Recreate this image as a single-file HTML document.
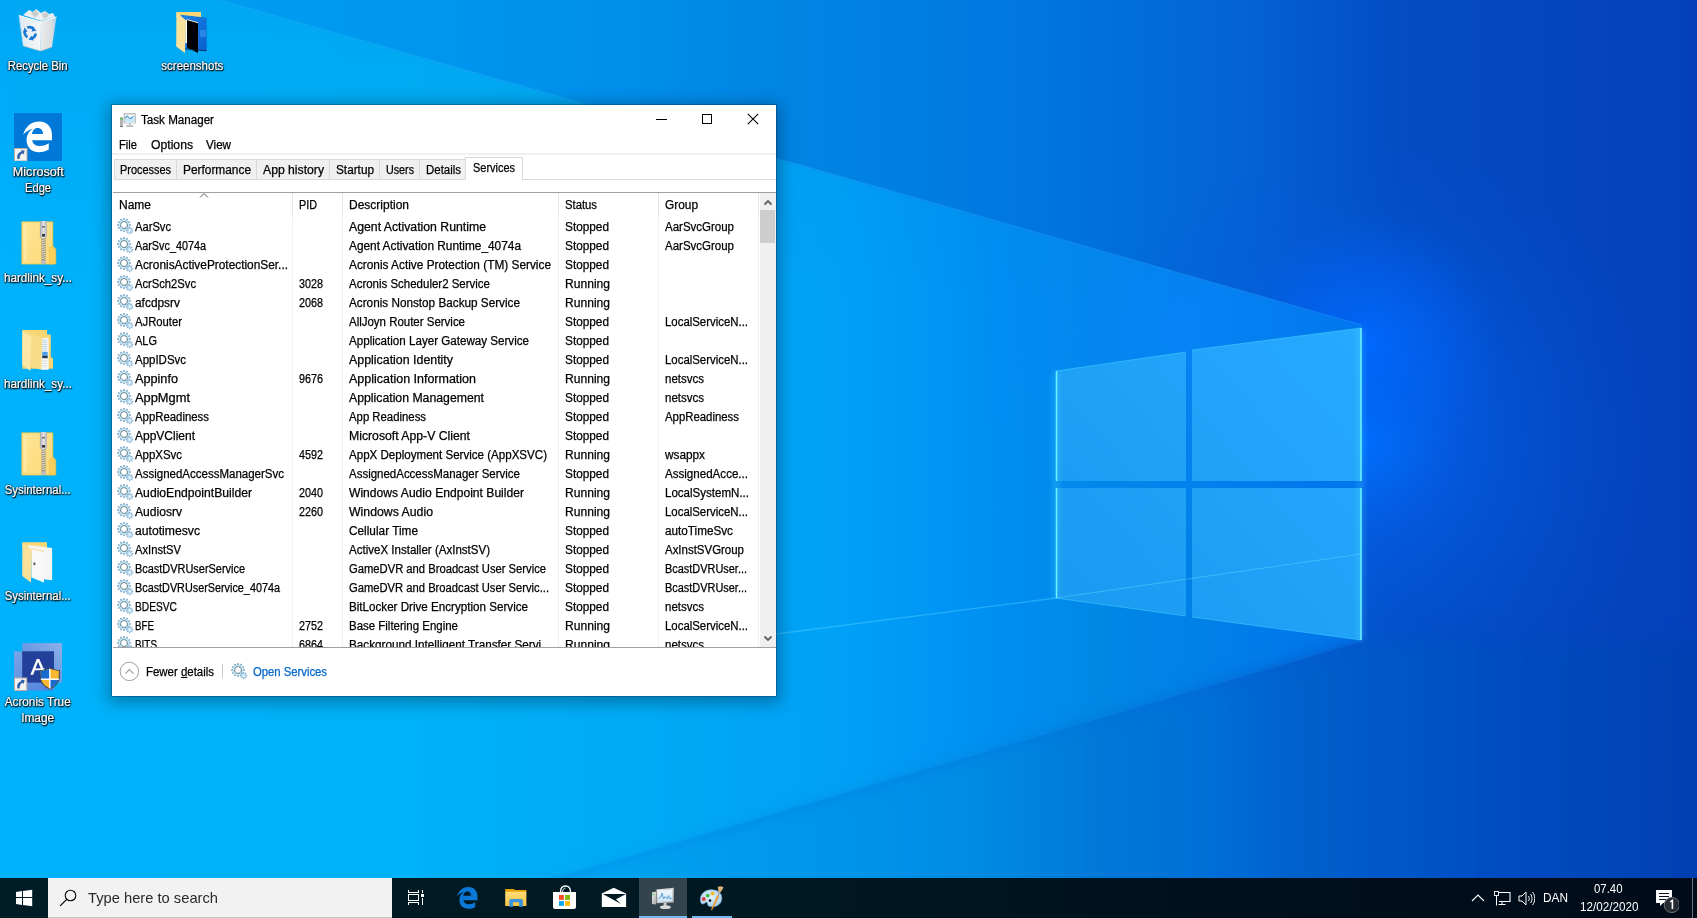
<!DOCTYPE html>
<html><head><meta charset="utf-8"><style>
html,body{margin:0;padding:0}
body{width:1697px;height:918px;overflow:hidden;position:relative;font-family:"Liberation Sans", sans-serif;color:#000}
#tm span{-webkit-text-stroke-width:0.25px}
.dl{position:absolute;text-align:center;color:#fff;font-size:12px;line-height:15px;text-shadow:0 0 2px #000,0 1px 2px #000,1px 1px 1px rgba(0,0,0,.8)}
.dl span{-webkit-text-stroke-width:0.2px}
</style></head><body>
<svg width="1697" height="918" style="position:absolute;left:0;top:0">
<defs>
<linearGradient id="bg" gradientUnits="userSpaceOnUse" x1="0" y1="0" x2="1697" y2="0">
 <stop offset="0" stop-color="#00a4f4"/>
 <stop offset="0.354" stop-color="#0090ec"/>
 <stop offset="0.471" stop-color="#0084e4"/>
 <stop offset="0.56" stop-color="#007ce2"/>
 <stop offset="0.619" stop-color="#0074e0"/>
 <stop offset="0.737" stop-color="#0462d6"/>
 <stop offset="0.825" stop-color="#044cc4"/>
 <stop offset="1" stop-color="#0440bc"/>
</linearGradient>
<linearGradient id="beam" gradientUnits="userSpaceOnUse" x1="0" y1="0" x2="1361" y2="0">
 <stop offset="0" stop-color="#00b2fc"/>
 <stop offset="0.294" stop-color="#00b2f8"/>
 <stop offset="0.514" stop-color="#00a8f4"/>
 <stop offset="0.625" stop-color="#00a0f8"/>
 <stop offset="0.735" stop-color="#008ef2"/>
 <stop offset="0.808" stop-color="#0088e6"/>
 <stop offset="1" stop-color="#0074ec"/>
</linearGradient>
<linearGradient id="beamv" gradientUnits="userSpaceOnUse" x1="0" y1="0" x2="0" y2="300">
 <stop offset="0" stop-color="#0060c0" stop-opacity="0.12"/>
 <stop offset="1" stop-color="#0060c0" stop-opacity="0"/>
</linearGradient>
<linearGradient id="floor" gradientUnits="userSpaceOnUse" x1="0" y1="0" x2="1697" y2="0">
 <stop offset="0.354" stop-color="#00a4f0"/>
 <stop offset="0.53" stop-color="#0090e8"/>
 <stop offset="0.589" stop-color="#0088e2"/>
 <stop offset="0.648" stop-color="#0278d8"/>
 <stop offset="0.707" stop-color="#0070d8"/>
 <stop offset="0.766" stop-color="#0460cc"/>
 <stop offset="0.884" stop-color="#044cc2"/>
 <stop offset="1" stop-color="#0440b2"/>
</linearGradient>
<radialGradient id="glow" cx="1365" cy="440" r="300" gradientUnits="userSpaceOnUse">
 <stop offset="0" stop-color="#0070ff" stop-opacity="1"/>
 <stop offset="0.3" stop-color="#0464f0" stop-opacity="0.55"/>
 <stop offset="1" stop-color="#0450d0" stop-opacity="0"/>
</radialGradient>
<radialGradient id="glow3" cx="1370" cy="345" r="130" gradientUnits="userSpaceOnUse">
 <stop offset="0" stop-color="#0068ff" stop-opacity="0.9"/>
 <stop offset="0.5" stop-color="#0064f8" stop-opacity="0.5"/>
 <stop offset="1" stop-color="#0060f0" stop-opacity="0"/>
</radialGradient>
<radialGradient id="glow2" cx="1180" cy="330" r="220" gradientUnits="userSpaceOnUse">
 <stop offset="0" stop-color="#0a84ff" stop-opacity="0.6"/>
 <stop offset="1" stop-color="#0a84ff" stop-opacity="0"/>
</radialGradient>
<linearGradient id="pane" gradientUnits="userSpaceOnUse" x1="1056" y1="600" x2="1361" y2="330">
 <stop offset="0" stop-color="#1a9af0"/>
 <stop offset="1" stop-color="#26aaff"/>
</linearGradient>
<filter id="fl" x="-10%" y="-10%" width="120%" height="120%"><feGaussianBlur stdDeviation="9"/></filter>
<filter id="soft" x="-5%" y="-5%" width="110%" height="110%"><feGaussianBlur stdDeviation="1.2"/></filter>
<filter id="gl" x="-50%" y="-50%" width="200%" height="200%"><feGaussianBlur stdDeviation="3"/></filter>
</defs>
<rect width="1697" height="918" fill="url(#bg)"/>
<polygon points="800,640 1361,640 1697,640 1697,918 800,918" fill="url(#floor)" opacity="0"/>
<polygon points="1361,640 -100,1058 1697,1058 1697,918" fill="url(#floor)" opacity="0.0"/>
<rect width="1697" height="918" fill="url(#glow)"/>
<rect width="1697" height="918" fill="url(#glow3)"/>
<polygon points="-100,-30 218,0 1361,325 1361,641 -100,1070" fill="url(#beam)" filter="url(#soft)"/>
<polygon points="-100,-30 218,0 1361,325 1361,641 -100,1070" fill="url(#beamv)"/>
<polygon points="-100,-30 218,0 1361,325 1361,641 -100,1070" fill="url(#glow2)"/>
<polygon points="1361,641 -100,1070 -100,1200 1800,1200 1800,641" fill="url(#floor)" filter="url(#fl)"/>
<line x1="218" y1="0" x2="1361" y2="325" stroke="#40b8ff" stroke-width="1.2" opacity="0.25"/>
<line x1="776" y1="634" x2="1056" y2="598" stroke="#50d0ff" stroke-width="1.4" opacity="0.45"/>
<line x1="0" y1="1040" x2="1361" y2="641" stroke="#40b8ff" stroke-width="1.2" opacity="0.1"/>
<g fill="url(#pane)">
 <polygon points="1056,371 1186,352 1186,481 1056,481"/>
 <polygon points="1192,350 1361,328 1361,481 1192,481"/>
 <polygon points="1056,488 1186,488 1186,616 1056,598"/>
 <polygon points="1192,488 1361,488 1361,640 1192,617"/>
</g>
<g fill="none" stroke="#48d8ff" stroke-width="1" opacity="0.5">
 <path d="M1056,371 L1186,352 M1192,350 L1361,328 M1056,598 L1186,616 M1192,617 L1361,640"/>
</g>
<g stroke="#5ef0ff" stroke-width="2" filter="url(#gl)" opacity="0.7">
 <line x1="1056" y1="371" x2="1056" y2="598"/>
 <line x1="1361" y1="328" x2="1361" y2="640"/>
</g>
<g stroke="#6af4ff" stroke-width="1.5">
 <line x1="1056.5" y1="371" x2="1056.5" y2="481"/>
 <line x1="1056.5" y1="488" x2="1056.5" y2="598"/>
 <line x1="1361" y1="328" x2="1361" y2="481"/>
 <line x1="1361" y1="488" x2="1361" y2="640"/>
</g>
<line x1="1056" y1="598" x2="1361" y2="554" stroke="#60d8ff" stroke-width="1" opacity="0.45"/>
</svg>
<svg style="position:absolute;left:14px;top:4px" width="48" height="50" viewBox="0 0 48 50">
<defs><linearGradient id="rbL" x1="0" y1="0" x2="1" y2="0"><stop offset="0" stop-color="#dfe9f0"/><stop offset="1" stop-color="#f4f6f7"/></linearGradient>
<linearGradient id="rbR" x1="0" y1="0" x2="1" y2="0"><stop offset="0" stop-color="#e9eaeb"/><stop offset="0.7" stop-color="#d9dde0"/><stop offset="1" stop-color="#9fcbe8"/></linearGradient></defs>
<polygon points="5,11.5 27,18 26.7,47 9.3,42" fill="url(#rbL)"/>
<polygon points="27,18 42.5,13 38,43 26.7,47" fill="url(#rbR)"/>
<path d="M9,11 L15,6 L19,8 L22,5 L27,9 L31,7 L35,10 L39,9 L41,13 L27,17 Z" fill="#eceeef"/>
<path d="M17,9 L22,6 L25,10 L21,14Z M28,10 L33,8 L35,12 L30,15Z" fill="#c9cdd0"/>
<polyline points="5,11.5 27,18 42.5,13" fill="none" stroke="#ffffff" stroke-width="1"/>
<path d="M5,11.5 L9.3,42" stroke="#b8d8ee" stroke-width="0.8"/>
<path d="M9.3,42 L26.7,47 L38,43" fill="none" stroke="#d8b8a8" stroke-width="0.7" opacity="0.7"/>
<g fill="none" stroke="#1b78d2" stroke-width="2.6">
<path d="M13.2,23.6 A6.2,6.2 0 0 1 19.6,24.8"/>
<path d="M21.8,29.5 A6.2,6.2 0 0 1 17.5,34.5"/>
<path d="M13.5,33.2 A6.2,6.2 0 0 1 10.8,27"/>
</g>
<g fill="#1b78d2"><path d="M18.5,22.2 L22.5,26.8 L17.6,27.4Z"/><path d="M19.6,36.6 L14.4,35.6 L17.6,31.8Z"/><path d="M9.2,29 L10.4,23.6 L13.6,27.4Z"/></g>
</svg><div class="dl" style="left:0px;top:59.0px;width:76px"><span style="display:inline-block;transform-origin:50% 0;transform:scaleX(0.9470)">Recycle Bin</span></div><svg style="position:absolute;left:168px;top:6px" width="48" height="50" viewBox="0 0 48 50">
<defs><linearGradient id="ssB" x1="0" y1="0" x2="1" y2="1"><stop offset="0" stop-color="#1c84e8"/><stop offset="1" stop-color="#0a5fd0"/></linearGradient></defs>
<polygon points="8.4,6 33,6 33,11 8.4,11" fill="#f9d774"/>
<polygon points="12.5,8.7 38.7,11.7 38.7,44.7 17.4,43" fill="url(#ssB)"/>
<rect x="32" y="24" width="6" height="7" fill="#3a9cf0" opacity="0.6"/>
<polygon points="17.4,14 19.5,14 19.5,37 17.4,37" fill="#ffffff"/>
<polygon points="19,13 30,16.3 30,47 19,41.4" fill="#000"/>
<polygon points="19,13 30,16.3 30,17.2 19,14" fill="#ffffff"/>
<polygon points="17.4,42.3 38.7,44.5 38.7,45.2 17.4,43.2" fill="#10223a"/>
<polygon points="8.4,6.5 18,14.2 16.9,47 8.2,40.6" fill="#fbe29c"/>
</svg><div class="dl" style="left:154px;top:59.0px;width:76px"><span style="display:inline-block;transform-origin:50% 0;transform:scaleX(0.9582)">screenshots</span></div><svg style="position:absolute;left:14px;top:113px" width="48" height="48" viewBox="0 0 48 48">
<rect width="48" height="48" fill="#0078d7"/>
<path d="M9.2,21.7 C11.5,13 18,8.6 25.5,8.6 C33,8.6 38,14 38,22 L38,27.2 L18.2,27.2 C18.6,31 21.8,33 26,33 C29.5,33 32.5,31.8 34.8,30.2 L34.8,36.6 C32,38.3 28.8,39.2 25,39.2 C17.2,39.2 12.6,34 12.6,27 C12.6,22.5 14.5,18.5 19,15.8 C15.5,16.5 11.5,18.8 9.2,21.7 Z M18,20.9 L29,20.9 C29,17.5 27,14.9 23.5,14.9 C20.5,14.9 18.5,17.5 18,20.9 Z" fill="#fff" fill-rule="evenodd"/>
<rect x="0.5" y="35.5" width="12.5" height="12.5" fill="#f2f2f2" stroke="#b9aca2" stroke-width="1"/>
<path d="M3.5,46 C2.6,42.5 4,39.5 7.5,38.8 L6.8,37.2 L10.6,37.4 L9.8,41.4 L8.8,40.2 C6.5,41 5.5,43 5.6,46 Z" fill="#2e5ea8"/>
</svg><div class="dl" style="left:0px;top:165.0px;width:76px"><span style="display:inline-block;transform-origin:50% 0;transform:scaleX(1.0475)">Microsoft</span></div><div class="dl" style="left:0px;top:180.5px;width:76px"><span style="display:inline-block;transform-origin:50% 0;transform:scaleX(0.9275)">Edge</span></div><svg style="position:absolute;left:14px;top:214px" width="48" height="54" viewBox="0 0 48 54">
<defs><linearGradient id="zpf14214" x1="0" y1="0" x2="1" y2="1"><stop offset="0" stop-color="#ffe596"/><stop offset="1" stop-color="#fcd978"/></linearGradient>
<linearGradient id="zph14214" x1="0" y1="0" x2="1" y2="0"><stop offset="0" stop-color="#a8a8a8"/><stop offset="0.5" stop-color="#e2e2e2"/><stop offset="1" stop-color="#b4b4b4"/></linearGradient></defs>
<rect x="7.9" y="7.9" width="30.9" height="42.1" fill="url(#zpf14214)" stroke="#f2c545" stroke-width="0.8"/>
<path d="M11.2,11 V47" stroke="#fff4cc" stroke-width="0.9"/>
<path d="M38.8,31.8 L41.8,35.3 L41.8,50 L35.3,50 L35.3,35.5 C35.3,34.2 36.5,33 38.8,31.8Z" fill="#f9cf5c" stroke="#f0c040" stroke-width="0.6"/>
<rect x="27.6" y="24" width="3.9" height="23" fill="#8a7a52"/>
<path d="M27.8,24.5 L31.3,25.4" stroke="#f4f4f4" stroke-width="0.9"/><path d="M27.8,26.3 L31.3,27.2" stroke="#f4f4f4" stroke-width="0.9"/><path d="M27.8,28.1 L31.3,29.0" stroke="#f4f4f4" stroke-width="0.9"/><path d="M27.8,29.9 L31.3,30.799999999999997" stroke="#f4f4f4" stroke-width="0.9"/><path d="M27.8,31.7 L31.3,32.6" stroke="#f4f4f4" stroke-width="0.9"/><path d="M27.8,33.5 L31.3,34.4" stroke="#f4f4f4" stroke-width="0.9"/><path d="M27.8,35.3 L31.3,36.2" stroke="#f4f4f4" stroke-width="0.9"/><path d="M27.8,37.1 L31.3,38.0" stroke="#f4f4f4" stroke-width="0.9"/><path d="M27.8,38.9 L31.3,39.8" stroke="#f4f4f4" stroke-width="0.9"/><path d="M27.8,40.7 L31.3,41.599999999999994" stroke="#f4f4f4" stroke-width="0.9"/><path d="M27.8,42.5 L31.3,43.4" stroke="#f4f4f4" stroke-width="0.9"/><path d="M27.8,44.3 L31.3,45.2" stroke="#f4f4f4" stroke-width="0.9"/>
<rect x="27" y="46.2" width="5" height="3.6" fill="#bdbdbd"/>
<rect x="25.9" y="7" width="7.1" height="17" rx="1.6" fill="url(#zph14214)"/>
<rect x="28" y="12" width="2.8" height="1.6" fill="#707070"/>
<rect x="28" y="20" width="3" height="2.6" fill="#3a3a3a"/>
</svg><div class="dl" style="left:0px;top:271.0px;width:76px"><span style="display:inline-block;transform-origin:50% 0;transform:scaleX(0.9740)">hardlink_sy...</span></div><svg style="position:absolute;left:14px;top:324px" width="48" height="50" viewBox="0 0 48 50">
<polygon points="8.4,6 33,6 33,10.4 36.8,10.4 36.8,32.7 39,34.5 39,44.7 8.4,44.7" fill="#f8d572"/>
<polygon points="27.2,13.9 34.6,13.9 34.6,45.8 27.2,45.8" fill="#f6f6f6"/>
<path d="M28.2,16.0 h5" stroke="#8fb8de" stroke-width="0.6"/><path d="M28.2,18.2 h5" stroke="#8fb8de" stroke-width="0.6"/><path d="M28.2,20.4 h5" stroke="#8fb8de" stroke-width="0.6"/><path d="M28.2,22.6 h5" stroke="#8fb8de" stroke-width="0.6"/><path d="M28.2,24.8 h5" stroke="#8fb8de" stroke-width="0.6"/><path d="M28.2,27.0 h5" stroke="#8fb8de" stroke-width="0.6"/>
<rect x="28.2" y="28" width="5.5" height="3.6" fill="#4aa0e6"/>
<rect x="28.2" y="31.6" width="5.5" height="2.6" fill="#1a3a5a"/>
<path d="M28.2,37 h5 M28.2,39.5 h5 M28.2,42 h5" stroke="#c8c8c8" stroke-width="0.6"/>
<polygon points="13,8.2 28.3,13.6 27.2,45.8 17.4,43" fill="#f8dc88"/>
<polygon points="8.4,6.5 17.4,13 16.3,46.9 8.2,40.6" fill="#fde7a6"/>
</svg><div class="dl" style="left:0px;top:377.0px;width:76px"><span style="display:inline-block;transform-origin:50% 0;transform:scaleX(0.9740)">hardlink_sy...</span></div><svg style="position:absolute;left:14px;top:425px" width="48" height="54" viewBox="0 0 48 54">
<defs><linearGradient id="zpf14425" x1="0" y1="0" x2="1" y2="1"><stop offset="0" stop-color="#ffe596"/><stop offset="1" stop-color="#fcd978"/></linearGradient>
<linearGradient id="zph14425" x1="0" y1="0" x2="1" y2="0"><stop offset="0" stop-color="#a8a8a8"/><stop offset="0.5" stop-color="#e2e2e2"/><stop offset="1" stop-color="#b4b4b4"/></linearGradient></defs>
<rect x="7.9" y="7.9" width="30.9" height="42.1" fill="url(#zpf14425)" stroke="#f2c545" stroke-width="0.8"/>
<path d="M11.2,11 V47" stroke="#fff4cc" stroke-width="0.9"/>
<path d="M38.8,31.8 L41.8,35.3 L41.8,50 L35.3,50 L35.3,35.5 C35.3,34.2 36.5,33 38.8,31.8Z" fill="#f9cf5c" stroke="#f0c040" stroke-width="0.6"/>
<rect x="27.6" y="24" width="3.9" height="23" fill="#8a7a52"/>
<path d="M27.8,24.5 L31.3,25.4" stroke="#f4f4f4" stroke-width="0.9"/><path d="M27.8,26.3 L31.3,27.2" stroke="#f4f4f4" stroke-width="0.9"/><path d="M27.8,28.1 L31.3,29.0" stroke="#f4f4f4" stroke-width="0.9"/><path d="M27.8,29.9 L31.3,30.799999999999997" stroke="#f4f4f4" stroke-width="0.9"/><path d="M27.8,31.7 L31.3,32.6" stroke="#f4f4f4" stroke-width="0.9"/><path d="M27.8,33.5 L31.3,34.4" stroke="#f4f4f4" stroke-width="0.9"/><path d="M27.8,35.3 L31.3,36.2" stroke="#f4f4f4" stroke-width="0.9"/><path d="M27.8,37.1 L31.3,38.0" stroke="#f4f4f4" stroke-width="0.9"/><path d="M27.8,38.9 L31.3,39.8" stroke="#f4f4f4" stroke-width="0.9"/><path d="M27.8,40.7 L31.3,41.599999999999994" stroke="#f4f4f4" stroke-width="0.9"/><path d="M27.8,42.5 L31.3,43.4" stroke="#f4f4f4" stroke-width="0.9"/><path d="M27.8,44.3 L31.3,45.2" stroke="#f4f4f4" stroke-width="0.9"/>
<rect x="27" y="46.2" width="5" height="3.6" fill="#bdbdbd"/>
<rect x="25.9" y="7" width="7.1" height="17" rx="1.6" fill="url(#zph14425)"/>
<rect x="28" y="12" width="2.8" height="1.6" fill="#707070"/>
<rect x="28" y="20" width="3" height="2.6" fill="#3a3a3a"/>
</svg><div class="dl" style="left:0px;top:482.5px;width:76px"><span style="display:inline-block;transform-origin:50% 0;transform:scaleX(0.9514)">Sysinternal...</span></div><svg style="position:absolute;left:14px;top:534px" width="48" height="50" viewBox="0 0 48 50">
<polygon points="8.4,8.2 33,8.2 33,14 8.4,14" fill="#f9d774"/>
<polygon points="13.6,10.9 38.1,13.9 38.1,46.3 29.4,45.2" fill="#f5f5f5"/>
<polygon points="17.4,14.7 30,17.4 30,48.5 17.4,43.6" fill="#f8f8f8"/>
<path d="M17.4,14.7 L30,17.4" stroke="#f2d27a" stroke-width="0.8"/>
<ellipse cx="20.4" cy="29.7" rx="1.1" ry="1.5" fill="#5a5a5a"/>
<polygon points="8.4,8.7 18,15.8 16.9,48.5 8.2,42" fill="#fbe09a"/>
</svg><div class="dl" style="left:0px;top:589.0px;width:76px"><span style="display:inline-block;transform-origin:50% 0;transform:scaleX(0.9514)">Sysinternal...</span></div><svg style="position:absolute;left:14px;top:642px" width="48" height="50" viewBox="0 0 48 50">
<defs><linearGradient id="acA" x1="0" y1="1" x2="1" y2="0"><stop offset="0" stop-color="#4f86de"/><stop offset="1" stop-color="#8db0e8"/></linearGradient>
<linearGradient id="acB" x1="0" y1="0" x2="1" y2="1"><stop offset="0" stop-color="#7aa4e6"/><stop offset="1" stop-color="#4f82dc"/></linearGradient></defs>
<rect x="8.2" y="1.1" width="39.8" height="39.5" fill="url(#acA)"/>
<rect x="0" y="9.3" width="40" height="39.2" fill="url(#acB)"/>
<rect x="8.2" y="9.3" width="31.8" height="31.3" fill="#22409a"/>
<path d="M16.3,32.7 L22.8,16.9 L25.3,16.9 L31.5,31 L28.6,31 L24,19.8 L19.2,32.7 Z" fill="#fff"/>
<rect x="20.5" y="26.4" width="10" height="1.8" fill="#fff"/>
<path d="M25.6,28.2 C29,27.8 32.5,26.8 35.8,25.9 C39,26.8 42.5,27.8 46,28.2 L45.6,36 C45,41.5 41,45 35.8,47.4 C30.6,45 26.6,41.5 26,36 Z" fill="#3b3b3b"/>
<path d="M26.6,28.9 C29.6,28.5 32.8,27.6 35.8,26.8 C38.8,27.6 42,28.5 45,28.9 L44.6,36 C44,41 40.6,44.2 35.8,46.4 C31,44.2 27.6,41 27,36 Z" fill="#fbb832"/>
<path d="M26.6,28.9 C29.6,28.5 32.8,27.6 35.8,26.8 L35.8,37.3 L26.8,37.3 Z" fill="#1a6ad0"/>
<path d="M35.8,37.3 L44.8,37.3 L44.6,36 C44,41 40.6,44.2 35.8,46.4 Z" fill="#1a6ad0"/>
<path d="M35.1,26.8 h1.4 v19.6 h-1.4z M26.8,36.6 h18 v1.4 h-18z" fill="#fff"/>
<rect x="0.5" y="36" width="12.3" height="12.5" fill="#f2f2f2" stroke="#b9aca2" stroke-width="1"/>
<path d="M3.5,46.5 C2.6,43 4,40 7.5,39.3 L6.8,37.7 L10.6,37.9 L9.8,41.9 L8.8,40.7 C6.5,41.5 5.5,43.5 5.6,46.5 Z" fill="#2e5ea8"/>
</svg><div class="dl" style="left:0px;top:695.0px;width:76px"><span style="display:inline-block;transform-origin:50% 0;transform:scaleX(0.9798)">Acronis True</span></div><div class="dl" style="left:0px;top:710.5px;width:76px"><span style="display:inline-block;transform-origin:50% 0;transform:scaleX(0.9892)">Image</span></div>
<div style="position:absolute;left:111px;top:104px;width:666px;height:593px;box-shadow:0 3px 15px 3px rgba(0,0,0,0.3);background:#fff;background-clip:padding-box;border:1px solid rgba(0,30,70,0.3);box-sizing:border-box"></div>
<div id="tm" style="position:absolute;left:0;top:0;width:1697px;height:918px"><svg style="position:absolute;left:119px;top:112px" width="18" height="16" viewBox="0 0 18 16">
<rect x="1" y="5" width="3" height="10" rx="0.8" fill="#b4b4b4"/>
<rect x="1.5" y="6" width="2" height="1.5" fill="#30d030"/>
<rect x="1" y="14" width="3" height="1" fill="#707070"/>
<rect x="4.5" y="1" width="12.5" height="10.5" rx="0.8" fill="#c4c4c4"/>
<rect x="6" y="2.6" width="9.6" height="8" fill="#f6fbfe"/>
<path d="M6,6.2 L8.2,3.8 L11,6.8 L15.6,4 V10.6 H6Z" fill="#c6e9f9"/>
<polyline points="6,6.2 8.2,3.8 11,6.8 14.6,4.4" fill="none" stroke="#2a7bc4" stroke-width="1"/>
<rect x="9.8" y="11.5" width="2" height="2" fill="#b8b8b8"/>
<rect x="7" y="13.3" width="7.5" height="1.8" rx="0.9" fill="#bdbdbd"/>
</svg><div style="position:absolute;left:141px;top:113px;font-size:12px;line-height:14px;white-space:pre;"><span style="display:inline-block;transform-origin:0 0;transform:scaleX(0.9685)">Task Manager</span></div><div style="position:absolute;left:656px;top:119px;width:11px;height:1px;background:#000"></div><div style="position:absolute;left:702px;top:114px;width:8px;height:8px;border:1px solid #000"></div><svg style="position:absolute;left:747px;top:113px" width="12" height="12" viewBox="0 0 12 12"><path d="M0.8,0.8 L11.2,11.2 M11.2,0.8 L0.8,11.2" stroke="#000" stroke-width="1.1"/></svg><div style="position:absolute;left:119px;top:138px;font-size:12px;line-height:14px;white-space:pre;"><span style="display:inline-block;transform-origin:0 0;transform:scaleX(0.9305)">File</span></div><div style="position:absolute;left:151px;top:138px;font-size:12px;line-height:14px;white-space:pre;"><span style="display:inline-block;transform-origin:0 0;transform:scaleX(1.0155)">Options</span></div><div style="position:absolute;left:206px;top:138px;font-size:12px;line-height:14px;white-space:pre;"><span style="display:inline-block;transform-origin:0 0;transform:scaleX(0.9691)">View</span></div><div style="position:absolute;left:112px;top:153px;width:664px;height:2px;background:#f0f0f0"></div><div style="position:absolute;left:114px;top:159px;width:352px;height:21px;background:#f0f0f0;border:1px solid #d9d9d9;border-right:none;box-sizing:border-box"></div><div style="position:absolute;left:120px;top:163px;font-size:12px;line-height:14px;white-space:pre;"><span style="display:inline-block;transform-origin:0 0;transform:scaleX(0.9102)">Processes</span></div><div style="position:absolute;left:176px;top:159px;width:1px;height:21px;background:#d9d9d9"></div><div style="position:absolute;left:183px;top:163px;font-size:12px;line-height:14px;white-space:pre;"><span style="display:inline-block;transform-origin:0 0;transform:scaleX(0.9898)">Performance</span></div><div style="position:absolute;left:256px;top:159px;width:1px;height:21px;background:#d9d9d9"></div><div style="position:absolute;left:263px;top:163px;font-size:12px;line-height:14px;white-space:pre;"><span style="display:inline-block;transform-origin:0 0;transform:scaleX(1.0161)">App history</span></div><div style="position:absolute;left:329px;top:159px;width:1px;height:21px;background:#d9d9d9"></div><div style="position:absolute;left:336px;top:163px;font-size:12px;line-height:14px;white-space:pre;"><span style="display:inline-block;transform-origin:0 0;transform:scaleX(0.9818)">Startup</span></div><div style="position:absolute;left:379px;top:159px;width:1px;height:21px;background:#d9d9d9"></div><div style="position:absolute;left:386px;top:163px;font-size:12px;line-height:14px;white-space:pre;"><span style="display:inline-block;transform-origin:0 0;transform:scaleX(0.8933)">Users</span></div><div style="position:absolute;left:419px;top:159px;width:1px;height:21px;background:#d9d9d9"></div><div style="position:absolute;left:426px;top:163px;font-size:12px;line-height:14px;white-space:pre;"><span style="display:inline-block;transform-origin:0 0;transform:scaleX(0.9540)">Details</span></div><div style="position:absolute;left:522px;top:179px;width:254px;height:1px;background:#d9d9d9"></div><div style="position:absolute;left:465px;top:157px;width:58px;height:23px;background:#fff;border:1px solid #d9d9d9;border-bottom:none;box-sizing:border-box"></div><div style="position:absolute;left:473px;top:161px;font-size:12px;line-height:14px;white-space:pre;"><span style="display:inline-block;transform-origin:0 0;transform:scaleX(0.9127)">Services</span></div><div style="position:absolute;left:113px;top:192px;width:663px;height:1px;background:#a0a0a0"></div><svg style="position:absolute;left:199px;top:192px" width="10" height="7" viewBox="0 0 10 7"><path d="M1,5.5 L5,1.5 L9,5.5" fill="none" stroke="#606060" stroke-width="1"/></svg><div style="position:absolute;left:119px;top:198px;font-size:12px;line-height:14px;white-space:pre;"><span style="display:inline-block;transform-origin:0 0;transform:scaleX(0.9995)">Name</span></div><div style="position:absolute;left:299px;top:198px;font-size:12px;line-height:14px;white-space:pre;"><span style="display:inline-block;transform-origin:0 0;transform:scaleX(0.8993)">PID</span></div><div style="position:absolute;left:349px;top:198px;font-size:12px;line-height:14px;white-space:pre;"><span style="display:inline-block;transform-origin:0 0;transform:scaleX(0.9995)">Description</span></div><div style="position:absolute;left:565px;top:198px;font-size:12px;line-height:14px;white-space:pre;"><span style="display:inline-block;transform-origin:0 0;transform:scaleX(0.9403)">Status</span></div><div style="position:absolute;left:665px;top:198px;font-size:12px;line-height:14px;white-space:pre;"><span style="display:inline-block;transform-origin:0 0;transform:scaleX(0.9892)">Group</span></div><div style="position:absolute;left:292px;top:193px;width:1px;height:24px;background:#e5e5e5"></div><div style="position:absolute;left:292px;top:217px;width:1px;height:430px;background:#eaf2fb"></div><div style="position:absolute;left:342px;top:193px;width:1px;height:24px;background:#e5e5e5"></div><div style="position:absolute;left:342px;top:217px;width:1px;height:430px;background:#eaf2fb"></div><div style="position:absolute;left:558px;top:193px;width:1px;height:24px;background:#e5e5e5"></div><div style="position:absolute;left:558px;top:217px;width:1px;height:430px;background:#eaf2fb"></div><div style="position:absolute;left:658px;top:193px;width:1px;height:24px;background:#e5e5e5"></div><div style="position:absolute;left:658px;top:217px;width:1px;height:430px;background:#eaf2fb"></div><div style="position:absolute;left:758px;top:193px;width:1px;height:24px;background:#e5e5e5"></div><div style="position:absolute;left:758px;top:217px;width:1px;height:430px;background:#eaf2fb"></div><div style="position:absolute;left:0;top:217px;width:758px;height:430px;overflow:hidden"><div style="position:absolute;left:117px;top:1px;width:16px;height:16px"><svg width="16" height="16" viewBox="0 0 16 16" style="overflow:visible"><path d="M12.22,5.60 L12.34,6.23 L13.96,6.27 L13.96,7.73 L12.34,7.77 L12.22,8.40 L12.02,9.00 L13.39,9.85 L12.66,11.11 L11.24,10.34 L10.82,10.82 L10.34,11.24 L11.11,12.66 L9.85,13.39 L9.00,12.02 L8.40,12.22 L7.77,12.34 L7.73,13.96 L6.27,13.96 L6.23,12.34 L5.60,12.22 L5.00,12.02 L4.15,13.39 L2.89,12.66 L3.66,11.24 L3.18,10.82 L2.76,10.34 L1.34,11.11 L0.61,9.85 L1.98,9.00 L1.78,8.40 L1.66,7.77 L0.04,7.73 L0.04,6.27 L1.66,6.23 L1.78,5.60 L1.98,5.00 L0.61,4.15 L1.34,2.89 L2.76,3.66 L3.18,3.18 L3.66,2.76 L2.89,1.34 L4.15,0.61 L5.00,1.98 L5.60,1.78 L6.23,1.66 L6.27,0.04 L7.73,0.04 L7.77,1.66 L8.40,1.78 L9.00,1.98 L9.85,0.61 L11.11,1.34 L10.34,2.76 L10.82,3.18 L11.24,3.66 L12.66,2.89 L13.39,4.15 L12.02,5.00Z" fill="#7fa6c6"/><circle cx="7" cy="7" r="5.2" fill="#c4ecf8"/><circle cx="7" cy="7" r="3.3" fill="none" stroke="#6e7880" stroke-width="1.2" stroke-dasharray="2.2 0.5"/><circle cx="7" cy="7" r="2.7" fill="#fff"/><path d="M15.09,11.57 L15.24,12.02 L16.25,12.02 L16.25,13.18 L15.24,13.18 L15.09,13.63 L14.87,14.06 L15.59,14.77 L14.77,15.59 L14.06,14.87 L13.63,15.09 L13.18,15.24 L13.18,16.25 L12.02,16.25 L12.02,15.24 L11.57,15.09 L11.14,14.87 L10.43,15.59 L9.61,14.77 L10.33,14.06 L10.11,13.63 L9.96,13.18 L8.95,13.18 L8.95,12.02 L9.96,12.02 L10.11,11.57 L10.33,11.14 L9.61,10.43 L10.43,9.61 L11.14,10.33 L11.57,10.11 L12.02,9.96 L12.02,8.95 L13.18,8.95 L13.18,9.96 L13.63,10.11 L14.06,10.33 L14.77,9.61 L15.59,10.43 L14.87,11.14Z" fill="#7fa6c6"/><circle cx="12.6" cy="12.6" r="2.6" fill="#b4d8ee"/><circle cx="12.6" cy="12.6" r="1.1" fill="#fff"/></svg></div><div style="position:absolute;left:135px;top:3px;font-size:12px;line-height:14px;white-space:pre;"><span style="display:inline-block;transform-origin:0 0;transform:scaleX(0.9305)">AarSvc</span></div><div style="position:absolute;left:349px;top:3px;font-size:12px;line-height:14px;white-space:pre;"><span style="display:inline-block;transform-origin:0 0;transform:scaleX(1.0218)">Agent Activation Runtime</span></div><div style="position:absolute;left:565px;top:3px;font-size:12px;line-height:14px;white-space:pre;"><span style="display:inline-block;transform-origin:0 0;transform:scaleX(0.9839)">Stopped</span></div><div style="position:absolute;left:665px;top:3px;font-size:12px;line-height:14px;white-space:pre;"><span style="display:inline-block;transform-origin:0 0;transform:scaleX(0.9579)">AarSvcGroup</span></div><div style="position:absolute;left:117px;top:20px;width:16px;height:16px"><svg width="16" height="16" viewBox="0 0 16 16" style="overflow:visible"><path d="M12.22,5.60 L12.34,6.23 L13.96,6.27 L13.96,7.73 L12.34,7.77 L12.22,8.40 L12.02,9.00 L13.39,9.85 L12.66,11.11 L11.24,10.34 L10.82,10.82 L10.34,11.24 L11.11,12.66 L9.85,13.39 L9.00,12.02 L8.40,12.22 L7.77,12.34 L7.73,13.96 L6.27,13.96 L6.23,12.34 L5.60,12.22 L5.00,12.02 L4.15,13.39 L2.89,12.66 L3.66,11.24 L3.18,10.82 L2.76,10.34 L1.34,11.11 L0.61,9.85 L1.98,9.00 L1.78,8.40 L1.66,7.77 L0.04,7.73 L0.04,6.27 L1.66,6.23 L1.78,5.60 L1.98,5.00 L0.61,4.15 L1.34,2.89 L2.76,3.66 L3.18,3.18 L3.66,2.76 L2.89,1.34 L4.15,0.61 L5.00,1.98 L5.60,1.78 L6.23,1.66 L6.27,0.04 L7.73,0.04 L7.77,1.66 L8.40,1.78 L9.00,1.98 L9.85,0.61 L11.11,1.34 L10.34,2.76 L10.82,3.18 L11.24,3.66 L12.66,2.89 L13.39,4.15 L12.02,5.00Z" fill="#7fa6c6"/><circle cx="7" cy="7" r="5.2" fill="#c4ecf8"/><circle cx="7" cy="7" r="3.3" fill="none" stroke="#6e7880" stroke-width="1.2" stroke-dasharray="2.2 0.5"/><circle cx="7" cy="7" r="2.7" fill="#fff"/><path d="M15.09,11.57 L15.24,12.02 L16.25,12.02 L16.25,13.18 L15.24,13.18 L15.09,13.63 L14.87,14.06 L15.59,14.77 L14.77,15.59 L14.06,14.87 L13.63,15.09 L13.18,15.24 L13.18,16.25 L12.02,16.25 L12.02,15.24 L11.57,15.09 L11.14,14.87 L10.43,15.59 L9.61,14.77 L10.33,14.06 L10.11,13.63 L9.96,13.18 L8.95,13.18 L8.95,12.02 L9.96,12.02 L10.11,11.57 L10.33,11.14 L9.61,10.43 L10.43,9.61 L11.14,10.33 L11.57,10.11 L12.02,9.96 L12.02,8.95 L13.18,8.95 L13.18,9.96 L13.63,10.11 L14.06,10.33 L14.77,9.61 L15.59,10.43 L14.87,11.14Z" fill="#7fa6c6"/><circle cx="12.6" cy="12.6" r="2.6" fill="#b4d8ee"/><circle cx="12.6" cy="12.6" r="1.1" fill="#fff"/></svg></div><div style="position:absolute;left:135px;top:22px;font-size:12px;line-height:14px;white-space:pre;"><span style="display:inline-block;transform-origin:0 0;transform:scaleX(0.9018)">AarSvc_4074a</span></div><div style="position:absolute;left:349px;top:22px;font-size:12px;line-height:14px;white-space:pre;"><span style="display:inline-block;transform-origin:0 0;transform:scaleX(0.9878)">Agent Activation Runtime_4074a</span></div><div style="position:absolute;left:565px;top:22px;font-size:12px;line-height:14px;white-space:pre;"><span style="display:inline-block;transform-origin:0 0;transform:scaleX(0.9839)">Stopped</span></div><div style="position:absolute;left:665px;top:22px;font-size:12px;line-height:14px;white-space:pre;"><span style="display:inline-block;transform-origin:0 0;transform:scaleX(0.9579)">AarSvcGroup</span></div><div style="position:absolute;left:117px;top:39px;width:16px;height:16px"><svg width="16" height="16" viewBox="0 0 16 16" style="overflow:visible"><path d="M12.22,5.60 L12.34,6.23 L13.96,6.27 L13.96,7.73 L12.34,7.77 L12.22,8.40 L12.02,9.00 L13.39,9.85 L12.66,11.11 L11.24,10.34 L10.82,10.82 L10.34,11.24 L11.11,12.66 L9.85,13.39 L9.00,12.02 L8.40,12.22 L7.77,12.34 L7.73,13.96 L6.27,13.96 L6.23,12.34 L5.60,12.22 L5.00,12.02 L4.15,13.39 L2.89,12.66 L3.66,11.24 L3.18,10.82 L2.76,10.34 L1.34,11.11 L0.61,9.85 L1.98,9.00 L1.78,8.40 L1.66,7.77 L0.04,7.73 L0.04,6.27 L1.66,6.23 L1.78,5.60 L1.98,5.00 L0.61,4.15 L1.34,2.89 L2.76,3.66 L3.18,3.18 L3.66,2.76 L2.89,1.34 L4.15,0.61 L5.00,1.98 L5.60,1.78 L6.23,1.66 L6.27,0.04 L7.73,0.04 L7.77,1.66 L8.40,1.78 L9.00,1.98 L9.85,0.61 L11.11,1.34 L10.34,2.76 L10.82,3.18 L11.24,3.66 L12.66,2.89 L13.39,4.15 L12.02,5.00Z" fill="#7fa6c6"/><circle cx="7" cy="7" r="5.2" fill="#c4ecf8"/><circle cx="7" cy="7" r="3.3" fill="none" stroke="#6e7880" stroke-width="1.2" stroke-dasharray="2.2 0.5"/><circle cx="7" cy="7" r="2.7" fill="#fff"/><path d="M15.09,11.57 L15.24,12.02 L16.25,12.02 L16.25,13.18 L15.24,13.18 L15.09,13.63 L14.87,14.06 L15.59,14.77 L14.77,15.59 L14.06,14.87 L13.63,15.09 L13.18,15.24 L13.18,16.25 L12.02,16.25 L12.02,15.24 L11.57,15.09 L11.14,14.87 L10.43,15.59 L9.61,14.77 L10.33,14.06 L10.11,13.63 L9.96,13.18 L8.95,13.18 L8.95,12.02 L9.96,12.02 L10.11,11.57 L10.33,11.14 L9.61,10.43 L10.43,9.61 L11.14,10.33 L11.57,10.11 L12.02,9.96 L12.02,8.95 L13.18,8.95 L13.18,9.96 L13.63,10.11 L14.06,10.33 L14.77,9.61 L15.59,10.43 L14.87,11.14Z" fill="#7fa6c6"/><circle cx="12.6" cy="12.6" r="2.6" fill="#b4d8ee"/><circle cx="12.6" cy="12.6" r="1.1" fill="#fff"/></svg></div><div style="position:absolute;left:135px;top:41px;font-size:12px;line-height:14px;white-space:pre;"><span style="display:inline-block;transform-origin:0 0;transform:scaleX(0.9888)">AcronisActiveProtectionSer...</span></div><div style="position:absolute;left:349px;top:41px;font-size:12px;line-height:14px;white-space:pre;"><span style="display:inline-block;transform-origin:0 0;transform:scaleX(0.9866)">Acronis Active Protection (TM) Service</span></div><div style="position:absolute;left:565px;top:41px;font-size:12px;line-height:14px;white-space:pre;"><span style="display:inline-block;transform-origin:0 0;transform:scaleX(0.9839)">Stopped</span></div><div style="position:absolute;left:117px;top:58px;width:16px;height:16px"><svg width="16" height="16" viewBox="0 0 16 16" style="overflow:visible"><path d="M12.22,5.60 L12.34,6.23 L13.96,6.27 L13.96,7.73 L12.34,7.77 L12.22,8.40 L12.02,9.00 L13.39,9.85 L12.66,11.11 L11.24,10.34 L10.82,10.82 L10.34,11.24 L11.11,12.66 L9.85,13.39 L9.00,12.02 L8.40,12.22 L7.77,12.34 L7.73,13.96 L6.27,13.96 L6.23,12.34 L5.60,12.22 L5.00,12.02 L4.15,13.39 L2.89,12.66 L3.66,11.24 L3.18,10.82 L2.76,10.34 L1.34,11.11 L0.61,9.85 L1.98,9.00 L1.78,8.40 L1.66,7.77 L0.04,7.73 L0.04,6.27 L1.66,6.23 L1.78,5.60 L1.98,5.00 L0.61,4.15 L1.34,2.89 L2.76,3.66 L3.18,3.18 L3.66,2.76 L2.89,1.34 L4.15,0.61 L5.00,1.98 L5.60,1.78 L6.23,1.66 L6.27,0.04 L7.73,0.04 L7.77,1.66 L8.40,1.78 L9.00,1.98 L9.85,0.61 L11.11,1.34 L10.34,2.76 L10.82,3.18 L11.24,3.66 L12.66,2.89 L13.39,4.15 L12.02,5.00Z" fill="#7fa6c6"/><circle cx="7" cy="7" r="5.2" fill="#c4ecf8"/><circle cx="7" cy="7" r="3.3" fill="none" stroke="#6e7880" stroke-width="1.2" stroke-dasharray="2.2 0.5"/><circle cx="7" cy="7" r="2.7" fill="#fff"/><path d="M15.09,11.57 L15.24,12.02 L16.25,12.02 L16.25,13.18 L15.24,13.18 L15.09,13.63 L14.87,14.06 L15.59,14.77 L14.77,15.59 L14.06,14.87 L13.63,15.09 L13.18,15.24 L13.18,16.25 L12.02,16.25 L12.02,15.24 L11.57,15.09 L11.14,14.87 L10.43,15.59 L9.61,14.77 L10.33,14.06 L10.11,13.63 L9.96,13.18 L8.95,13.18 L8.95,12.02 L9.96,12.02 L10.11,11.57 L10.33,11.14 L9.61,10.43 L10.43,9.61 L11.14,10.33 L11.57,10.11 L12.02,9.96 L12.02,8.95 L13.18,8.95 L13.18,9.96 L13.63,10.11 L14.06,10.33 L14.77,9.61 L15.59,10.43 L14.87,11.14Z" fill="#7fa6c6"/><circle cx="12.6" cy="12.6" r="2.6" fill="#b4d8ee"/><circle cx="12.6" cy="12.6" r="1.1" fill="#fff"/></svg></div><div style="position:absolute;left:135px;top:60px;font-size:12px;line-height:14px;white-space:pre;"><span style="display:inline-block;transform-origin:0 0;transform:scaleX(0.9333)">AcrSch2Svc</span></div><div style="position:absolute;left:299px;top:60px;font-size:12px;line-height:14px;white-space:pre;"><span style="display:inline-block;transform-origin:0 0;transform:scaleX(0.8988)">3028</span></div><div style="position:absolute;left:349px;top:60px;font-size:12px;line-height:14px;white-space:pre;"><span style="display:inline-block;transform-origin:0 0;transform:scaleX(0.9565)">Acronis Scheduler2 Service</span></div><div style="position:absolute;left:565px;top:60px;font-size:12px;line-height:14px;white-space:pre;"><span style="display:inline-block;transform-origin:0 0;transform:scaleX(1.0066)">Running</span></div><div style="position:absolute;left:117px;top:77px;width:16px;height:16px"><svg width="16" height="16" viewBox="0 0 16 16" style="overflow:visible"><path d="M12.22,5.60 L12.34,6.23 L13.96,6.27 L13.96,7.73 L12.34,7.77 L12.22,8.40 L12.02,9.00 L13.39,9.85 L12.66,11.11 L11.24,10.34 L10.82,10.82 L10.34,11.24 L11.11,12.66 L9.85,13.39 L9.00,12.02 L8.40,12.22 L7.77,12.34 L7.73,13.96 L6.27,13.96 L6.23,12.34 L5.60,12.22 L5.00,12.02 L4.15,13.39 L2.89,12.66 L3.66,11.24 L3.18,10.82 L2.76,10.34 L1.34,11.11 L0.61,9.85 L1.98,9.00 L1.78,8.40 L1.66,7.77 L0.04,7.73 L0.04,6.27 L1.66,6.23 L1.78,5.60 L1.98,5.00 L0.61,4.15 L1.34,2.89 L2.76,3.66 L3.18,3.18 L3.66,2.76 L2.89,1.34 L4.15,0.61 L5.00,1.98 L5.60,1.78 L6.23,1.66 L6.27,0.04 L7.73,0.04 L7.77,1.66 L8.40,1.78 L9.00,1.98 L9.85,0.61 L11.11,1.34 L10.34,2.76 L10.82,3.18 L11.24,3.66 L12.66,2.89 L13.39,4.15 L12.02,5.00Z" fill="#7fa6c6"/><circle cx="7" cy="7" r="5.2" fill="#c4ecf8"/><circle cx="7" cy="7" r="3.3" fill="none" stroke="#6e7880" stroke-width="1.2" stroke-dasharray="2.2 0.5"/><circle cx="7" cy="7" r="2.7" fill="#fff"/><path d="M15.09,11.57 L15.24,12.02 L16.25,12.02 L16.25,13.18 L15.24,13.18 L15.09,13.63 L14.87,14.06 L15.59,14.77 L14.77,15.59 L14.06,14.87 L13.63,15.09 L13.18,15.24 L13.18,16.25 L12.02,16.25 L12.02,15.24 L11.57,15.09 L11.14,14.87 L10.43,15.59 L9.61,14.77 L10.33,14.06 L10.11,13.63 L9.96,13.18 L8.95,13.18 L8.95,12.02 L9.96,12.02 L10.11,11.57 L10.33,11.14 L9.61,10.43 L10.43,9.61 L11.14,10.33 L11.57,10.11 L12.02,9.96 L12.02,8.95 L13.18,8.95 L13.18,9.96 L13.63,10.11 L14.06,10.33 L14.77,9.61 L15.59,10.43 L14.87,11.14Z" fill="#7fa6c6"/><circle cx="12.6" cy="12.6" r="2.6" fill="#b4d8ee"/><circle cx="12.6" cy="12.6" r="1.1" fill="#fff"/></svg></div><div style="position:absolute;left:135px;top:79px;font-size:12px;line-height:14px;white-space:pre;"><span style="display:inline-block;transform-origin:0 0;transform:scaleX(0.9921)">afcdpsrv</span></div><div style="position:absolute;left:299px;top:79px;font-size:12px;line-height:14px;white-space:pre;"><span style="display:inline-block;transform-origin:0 0;transform:scaleX(0.8988)">2068</span></div><div style="position:absolute;left:349px;top:79px;font-size:12px;line-height:14px;white-space:pre;"><span style="display:inline-block;transform-origin:0 0;transform:scaleX(0.9785)">Acronis Nonstop Backup Service</span></div><div style="position:absolute;left:565px;top:79px;font-size:12px;line-height:14px;white-space:pre;"><span style="display:inline-block;transform-origin:0 0;transform:scaleX(1.0066)">Running</span></div><div style="position:absolute;left:117px;top:96px;width:16px;height:16px"><svg width="16" height="16" viewBox="0 0 16 16" style="overflow:visible"><path d="M12.22,5.60 L12.34,6.23 L13.96,6.27 L13.96,7.73 L12.34,7.77 L12.22,8.40 L12.02,9.00 L13.39,9.85 L12.66,11.11 L11.24,10.34 L10.82,10.82 L10.34,11.24 L11.11,12.66 L9.85,13.39 L9.00,12.02 L8.40,12.22 L7.77,12.34 L7.73,13.96 L6.27,13.96 L6.23,12.34 L5.60,12.22 L5.00,12.02 L4.15,13.39 L2.89,12.66 L3.66,11.24 L3.18,10.82 L2.76,10.34 L1.34,11.11 L0.61,9.85 L1.98,9.00 L1.78,8.40 L1.66,7.77 L0.04,7.73 L0.04,6.27 L1.66,6.23 L1.78,5.60 L1.98,5.00 L0.61,4.15 L1.34,2.89 L2.76,3.66 L3.18,3.18 L3.66,2.76 L2.89,1.34 L4.15,0.61 L5.00,1.98 L5.60,1.78 L6.23,1.66 L6.27,0.04 L7.73,0.04 L7.77,1.66 L8.40,1.78 L9.00,1.98 L9.85,0.61 L11.11,1.34 L10.34,2.76 L10.82,3.18 L11.24,3.66 L12.66,2.89 L13.39,4.15 L12.02,5.00Z" fill="#7fa6c6"/><circle cx="7" cy="7" r="5.2" fill="#c4ecf8"/><circle cx="7" cy="7" r="3.3" fill="none" stroke="#6e7880" stroke-width="1.2" stroke-dasharray="2.2 0.5"/><circle cx="7" cy="7" r="2.7" fill="#fff"/><path d="M15.09,11.57 L15.24,12.02 L16.25,12.02 L16.25,13.18 L15.24,13.18 L15.09,13.63 L14.87,14.06 L15.59,14.77 L14.77,15.59 L14.06,14.87 L13.63,15.09 L13.18,15.24 L13.18,16.25 L12.02,16.25 L12.02,15.24 L11.57,15.09 L11.14,14.87 L10.43,15.59 L9.61,14.77 L10.33,14.06 L10.11,13.63 L9.96,13.18 L8.95,13.18 L8.95,12.02 L9.96,12.02 L10.11,11.57 L10.33,11.14 L9.61,10.43 L10.43,9.61 L11.14,10.33 L11.57,10.11 L12.02,9.96 L12.02,8.95 L13.18,8.95 L13.18,9.96 L13.63,10.11 L14.06,10.33 L14.77,9.61 L15.59,10.43 L14.87,11.14Z" fill="#7fa6c6"/><circle cx="12.6" cy="12.6" r="2.6" fill="#b4d8ee"/><circle cx="12.6" cy="12.6" r="1.1" fill="#fff"/></svg></div><div style="position:absolute;left:135px;top:98px;font-size:12px;line-height:14px;white-space:pre;"><span style="display:inline-block;transform-origin:0 0;transform:scaleX(0.9394)">AJRouter</span></div><div style="position:absolute;left:349px;top:98px;font-size:12px;line-height:14px;white-space:pre;"><span style="display:inline-block;transform-origin:0 0;transform:scaleX(0.9556)">AllJoyn Router Service</span></div><div style="position:absolute;left:565px;top:98px;font-size:12px;line-height:14px;white-space:pre;"><span style="display:inline-block;transform-origin:0 0;transform:scaleX(0.9839)">Stopped</span></div><div style="position:absolute;left:665px;top:98px;font-size:12px;line-height:14px;white-space:pre;"><span style="display:inline-block;transform-origin:0 0;transform:scaleX(0.9499)">LocalServiceN...</span></div><div style="position:absolute;left:117px;top:115px;width:16px;height:16px"><svg width="16" height="16" viewBox="0 0 16 16" style="overflow:visible"><path d="M12.22,5.60 L12.34,6.23 L13.96,6.27 L13.96,7.73 L12.34,7.77 L12.22,8.40 L12.02,9.00 L13.39,9.85 L12.66,11.11 L11.24,10.34 L10.82,10.82 L10.34,11.24 L11.11,12.66 L9.85,13.39 L9.00,12.02 L8.40,12.22 L7.77,12.34 L7.73,13.96 L6.27,13.96 L6.23,12.34 L5.60,12.22 L5.00,12.02 L4.15,13.39 L2.89,12.66 L3.66,11.24 L3.18,10.82 L2.76,10.34 L1.34,11.11 L0.61,9.85 L1.98,9.00 L1.78,8.40 L1.66,7.77 L0.04,7.73 L0.04,6.27 L1.66,6.23 L1.78,5.60 L1.98,5.00 L0.61,4.15 L1.34,2.89 L2.76,3.66 L3.18,3.18 L3.66,2.76 L2.89,1.34 L4.15,0.61 L5.00,1.98 L5.60,1.78 L6.23,1.66 L6.27,0.04 L7.73,0.04 L7.77,1.66 L8.40,1.78 L9.00,1.98 L9.85,0.61 L11.11,1.34 L10.34,2.76 L10.82,3.18 L11.24,3.66 L12.66,2.89 L13.39,4.15 L12.02,5.00Z" fill="#7fa6c6"/><circle cx="7" cy="7" r="5.2" fill="#c4ecf8"/><circle cx="7" cy="7" r="3.3" fill="none" stroke="#6e7880" stroke-width="1.2" stroke-dasharray="2.2 0.5"/><circle cx="7" cy="7" r="2.7" fill="#fff"/><path d="M15.09,11.57 L15.24,12.02 L16.25,12.02 L16.25,13.18 L15.24,13.18 L15.09,13.63 L14.87,14.06 L15.59,14.77 L14.77,15.59 L14.06,14.87 L13.63,15.09 L13.18,15.24 L13.18,16.25 L12.02,16.25 L12.02,15.24 L11.57,15.09 L11.14,14.87 L10.43,15.59 L9.61,14.77 L10.33,14.06 L10.11,13.63 L9.96,13.18 L8.95,13.18 L8.95,12.02 L9.96,12.02 L10.11,11.57 L10.33,11.14 L9.61,10.43 L10.43,9.61 L11.14,10.33 L11.57,10.11 L12.02,9.96 L12.02,8.95 L13.18,8.95 L13.18,9.96 L13.63,10.11 L14.06,10.33 L14.77,9.61 L15.59,10.43 L14.87,11.14Z" fill="#7fa6c6"/><circle cx="12.6" cy="12.6" r="2.6" fill="#b4d8ee"/><circle cx="12.6" cy="12.6" r="1.1" fill="#fff"/></svg></div><div style="position:absolute;left:135px;top:117px;font-size:12px;line-height:14px;white-space:pre;"><span style="display:inline-block;transform-origin:0 0;transform:scaleX(0.9161)">ALG</span></div><div style="position:absolute;left:349px;top:117px;font-size:12px;line-height:14px;white-space:pre;"><span style="display:inline-block;transform-origin:0 0;transform:scaleX(0.9673)">Application Layer Gateway Service</span></div><div style="position:absolute;left:565px;top:117px;font-size:12px;line-height:14px;white-space:pre;"><span style="display:inline-block;transform-origin:0 0;transform:scaleX(0.9839)">Stopped</span></div><div style="position:absolute;left:117px;top:134px;width:16px;height:16px"><svg width="16" height="16" viewBox="0 0 16 16" style="overflow:visible"><path d="M12.22,5.60 L12.34,6.23 L13.96,6.27 L13.96,7.73 L12.34,7.77 L12.22,8.40 L12.02,9.00 L13.39,9.85 L12.66,11.11 L11.24,10.34 L10.82,10.82 L10.34,11.24 L11.11,12.66 L9.85,13.39 L9.00,12.02 L8.40,12.22 L7.77,12.34 L7.73,13.96 L6.27,13.96 L6.23,12.34 L5.60,12.22 L5.00,12.02 L4.15,13.39 L2.89,12.66 L3.66,11.24 L3.18,10.82 L2.76,10.34 L1.34,11.11 L0.61,9.85 L1.98,9.00 L1.78,8.40 L1.66,7.77 L0.04,7.73 L0.04,6.27 L1.66,6.23 L1.78,5.60 L1.98,5.00 L0.61,4.15 L1.34,2.89 L2.76,3.66 L3.18,3.18 L3.66,2.76 L2.89,1.34 L4.15,0.61 L5.00,1.98 L5.60,1.78 L6.23,1.66 L6.27,0.04 L7.73,0.04 L7.77,1.66 L8.40,1.78 L9.00,1.98 L9.85,0.61 L11.11,1.34 L10.34,2.76 L10.82,3.18 L11.24,3.66 L12.66,2.89 L13.39,4.15 L12.02,5.00Z" fill="#7fa6c6"/><circle cx="7" cy="7" r="5.2" fill="#c4ecf8"/><circle cx="7" cy="7" r="3.3" fill="none" stroke="#6e7880" stroke-width="1.2" stroke-dasharray="2.2 0.5"/><circle cx="7" cy="7" r="2.7" fill="#fff"/><path d="M15.09,11.57 L15.24,12.02 L16.25,12.02 L16.25,13.18 L15.24,13.18 L15.09,13.63 L14.87,14.06 L15.59,14.77 L14.77,15.59 L14.06,14.87 L13.63,15.09 L13.18,15.24 L13.18,16.25 L12.02,16.25 L12.02,15.24 L11.57,15.09 L11.14,14.87 L10.43,15.59 L9.61,14.77 L10.33,14.06 L10.11,13.63 L9.96,13.18 L8.95,13.18 L8.95,12.02 L9.96,12.02 L10.11,11.57 L10.33,11.14 L9.61,10.43 L10.43,9.61 L11.14,10.33 L11.57,10.11 L12.02,9.96 L12.02,8.95 L13.18,8.95 L13.18,9.96 L13.63,10.11 L14.06,10.33 L14.77,9.61 L15.59,10.43 L14.87,11.14Z" fill="#7fa6c6"/><circle cx="12.6" cy="12.6" r="2.6" fill="#b4d8ee"/><circle cx="12.6" cy="12.6" r="1.1" fill="#fff"/></svg></div><div style="position:absolute;left:135px;top:136px;font-size:12px;line-height:14px;white-space:pre;"><span style="display:inline-block;transform-origin:0 0;transform:scaleX(0.9558)">AppIDSvc</span></div><div style="position:absolute;left:349px;top:136px;font-size:12px;line-height:14px;white-space:pre;"><span style="display:inline-block;transform-origin:0 0;transform:scaleX(1.0324)">Application Identity</span></div><div style="position:absolute;left:565px;top:136px;font-size:12px;line-height:14px;white-space:pre;"><span style="display:inline-block;transform-origin:0 0;transform:scaleX(0.9839)">Stopped</span></div><div style="position:absolute;left:665px;top:136px;font-size:12px;line-height:14px;white-space:pre;"><span style="display:inline-block;transform-origin:0 0;transform:scaleX(0.9499)">LocalServiceN...</span></div><div style="position:absolute;left:117px;top:153px;width:16px;height:16px"><svg width="16" height="16" viewBox="0 0 16 16" style="overflow:visible"><path d="M12.22,5.60 L12.34,6.23 L13.96,6.27 L13.96,7.73 L12.34,7.77 L12.22,8.40 L12.02,9.00 L13.39,9.85 L12.66,11.11 L11.24,10.34 L10.82,10.82 L10.34,11.24 L11.11,12.66 L9.85,13.39 L9.00,12.02 L8.40,12.22 L7.77,12.34 L7.73,13.96 L6.27,13.96 L6.23,12.34 L5.60,12.22 L5.00,12.02 L4.15,13.39 L2.89,12.66 L3.66,11.24 L3.18,10.82 L2.76,10.34 L1.34,11.11 L0.61,9.85 L1.98,9.00 L1.78,8.40 L1.66,7.77 L0.04,7.73 L0.04,6.27 L1.66,6.23 L1.78,5.60 L1.98,5.00 L0.61,4.15 L1.34,2.89 L2.76,3.66 L3.18,3.18 L3.66,2.76 L2.89,1.34 L4.15,0.61 L5.00,1.98 L5.60,1.78 L6.23,1.66 L6.27,0.04 L7.73,0.04 L7.77,1.66 L8.40,1.78 L9.00,1.98 L9.85,0.61 L11.11,1.34 L10.34,2.76 L10.82,3.18 L11.24,3.66 L12.66,2.89 L13.39,4.15 L12.02,5.00Z" fill="#7fa6c6"/><circle cx="7" cy="7" r="5.2" fill="#c4ecf8"/><circle cx="7" cy="7" r="3.3" fill="none" stroke="#6e7880" stroke-width="1.2" stroke-dasharray="2.2 0.5"/><circle cx="7" cy="7" r="2.7" fill="#fff"/><path d="M15.09,11.57 L15.24,12.02 L16.25,12.02 L16.25,13.18 L15.24,13.18 L15.09,13.63 L14.87,14.06 L15.59,14.77 L14.77,15.59 L14.06,14.87 L13.63,15.09 L13.18,15.24 L13.18,16.25 L12.02,16.25 L12.02,15.24 L11.57,15.09 L11.14,14.87 L10.43,15.59 L9.61,14.77 L10.33,14.06 L10.11,13.63 L9.96,13.18 L8.95,13.18 L8.95,12.02 L9.96,12.02 L10.11,11.57 L10.33,11.14 L9.61,10.43 L10.43,9.61 L11.14,10.33 L11.57,10.11 L12.02,9.96 L12.02,8.95 L13.18,8.95 L13.18,9.96 L13.63,10.11 L14.06,10.33 L14.77,9.61 L15.59,10.43 L14.87,11.14Z" fill="#7fa6c6"/><circle cx="12.6" cy="12.6" r="2.6" fill="#b4d8ee"/><circle cx="12.6" cy="12.6" r="1.1" fill="#fff"/></svg></div><div style="position:absolute;left:135px;top:155px;font-size:12px;line-height:14px;white-space:pre;"><span style="display:inline-block;transform-origin:0 0;transform:scaleX(1.0564)">Appinfo</span></div><div style="position:absolute;left:299px;top:155px;font-size:12px;line-height:14px;white-space:pre;"><span style="display:inline-block;transform-origin:0 0;transform:scaleX(0.8988)">9676</span></div><div style="position:absolute;left:349px;top:155px;font-size:12px;line-height:14px;white-space:pre;"><span style="display:inline-block;transform-origin:0 0;transform:scaleX(1.0403)">Application Information</span></div><div style="position:absolute;left:565px;top:155px;font-size:12px;line-height:14px;white-space:pre;"><span style="display:inline-block;transform-origin:0 0;transform:scaleX(1.0066)">Running</span></div><div style="position:absolute;left:665px;top:155px;font-size:12px;line-height:14px;white-space:pre;"><span style="display:inline-block;transform-origin:0 0;transform:scaleX(0.9585)">netsvcs</span></div><div style="position:absolute;left:117px;top:172px;width:16px;height:16px"><svg width="16" height="16" viewBox="0 0 16 16" style="overflow:visible"><path d="M12.22,5.60 L12.34,6.23 L13.96,6.27 L13.96,7.73 L12.34,7.77 L12.22,8.40 L12.02,9.00 L13.39,9.85 L12.66,11.11 L11.24,10.34 L10.82,10.82 L10.34,11.24 L11.11,12.66 L9.85,13.39 L9.00,12.02 L8.40,12.22 L7.77,12.34 L7.73,13.96 L6.27,13.96 L6.23,12.34 L5.60,12.22 L5.00,12.02 L4.15,13.39 L2.89,12.66 L3.66,11.24 L3.18,10.82 L2.76,10.34 L1.34,11.11 L0.61,9.85 L1.98,9.00 L1.78,8.40 L1.66,7.77 L0.04,7.73 L0.04,6.27 L1.66,6.23 L1.78,5.60 L1.98,5.00 L0.61,4.15 L1.34,2.89 L2.76,3.66 L3.18,3.18 L3.66,2.76 L2.89,1.34 L4.15,0.61 L5.00,1.98 L5.60,1.78 L6.23,1.66 L6.27,0.04 L7.73,0.04 L7.77,1.66 L8.40,1.78 L9.00,1.98 L9.85,0.61 L11.11,1.34 L10.34,2.76 L10.82,3.18 L11.24,3.66 L12.66,2.89 L13.39,4.15 L12.02,5.00Z" fill="#7fa6c6"/><circle cx="7" cy="7" r="5.2" fill="#c4ecf8"/><circle cx="7" cy="7" r="3.3" fill="none" stroke="#6e7880" stroke-width="1.2" stroke-dasharray="2.2 0.5"/><circle cx="7" cy="7" r="2.7" fill="#fff"/><path d="M15.09,11.57 L15.24,12.02 L16.25,12.02 L16.25,13.18 L15.24,13.18 L15.09,13.63 L14.87,14.06 L15.59,14.77 L14.77,15.59 L14.06,14.87 L13.63,15.09 L13.18,15.24 L13.18,16.25 L12.02,16.25 L12.02,15.24 L11.57,15.09 L11.14,14.87 L10.43,15.59 L9.61,14.77 L10.33,14.06 L10.11,13.63 L9.96,13.18 L8.95,13.18 L8.95,12.02 L9.96,12.02 L10.11,11.57 L10.33,11.14 L9.61,10.43 L10.43,9.61 L11.14,10.33 L11.57,10.11 L12.02,9.96 L12.02,8.95 L13.18,8.95 L13.18,9.96 L13.63,10.11 L14.06,10.33 L14.77,9.61 L15.59,10.43 L14.87,11.14Z" fill="#7fa6c6"/><circle cx="12.6" cy="12.6" r="2.6" fill="#b4d8ee"/><circle cx="12.6" cy="12.6" r="1.1" fill="#fff"/></svg></div><div style="position:absolute;left:135px;top:174px;font-size:12px;line-height:14px;white-space:pre;"><span style="display:inline-block;transform-origin:0 0;transform:scaleX(1.0709)">AppMgmt</span></div><div style="position:absolute;left:349px;top:174px;font-size:12px;line-height:14px;white-space:pre;"><span style="display:inline-block;transform-origin:0 0;transform:scaleX(1.0220)">Application Management</span></div><div style="position:absolute;left:565px;top:174px;font-size:12px;line-height:14px;white-space:pre;"><span style="display:inline-block;transform-origin:0 0;transform:scaleX(0.9839)">Stopped</span></div><div style="position:absolute;left:665px;top:174px;font-size:12px;line-height:14px;white-space:pre;"><span style="display:inline-block;transform-origin:0 0;transform:scaleX(0.9585)">netsvcs</span></div><div style="position:absolute;left:117px;top:191px;width:16px;height:16px"><svg width="16" height="16" viewBox="0 0 16 16" style="overflow:visible"><path d="M12.22,5.60 L12.34,6.23 L13.96,6.27 L13.96,7.73 L12.34,7.77 L12.22,8.40 L12.02,9.00 L13.39,9.85 L12.66,11.11 L11.24,10.34 L10.82,10.82 L10.34,11.24 L11.11,12.66 L9.85,13.39 L9.00,12.02 L8.40,12.22 L7.77,12.34 L7.73,13.96 L6.27,13.96 L6.23,12.34 L5.60,12.22 L5.00,12.02 L4.15,13.39 L2.89,12.66 L3.66,11.24 L3.18,10.82 L2.76,10.34 L1.34,11.11 L0.61,9.85 L1.98,9.00 L1.78,8.40 L1.66,7.77 L0.04,7.73 L0.04,6.27 L1.66,6.23 L1.78,5.60 L1.98,5.00 L0.61,4.15 L1.34,2.89 L2.76,3.66 L3.18,3.18 L3.66,2.76 L2.89,1.34 L4.15,0.61 L5.00,1.98 L5.60,1.78 L6.23,1.66 L6.27,0.04 L7.73,0.04 L7.77,1.66 L8.40,1.78 L9.00,1.98 L9.85,0.61 L11.11,1.34 L10.34,2.76 L10.82,3.18 L11.24,3.66 L12.66,2.89 L13.39,4.15 L12.02,5.00Z" fill="#7fa6c6"/><circle cx="7" cy="7" r="5.2" fill="#c4ecf8"/><circle cx="7" cy="7" r="3.3" fill="none" stroke="#6e7880" stroke-width="1.2" stroke-dasharray="2.2 0.5"/><circle cx="7" cy="7" r="2.7" fill="#fff"/><path d="M15.09,11.57 L15.24,12.02 L16.25,12.02 L16.25,13.18 L15.24,13.18 L15.09,13.63 L14.87,14.06 L15.59,14.77 L14.77,15.59 L14.06,14.87 L13.63,15.09 L13.18,15.24 L13.18,16.25 L12.02,16.25 L12.02,15.24 L11.57,15.09 L11.14,14.87 L10.43,15.59 L9.61,14.77 L10.33,14.06 L10.11,13.63 L9.96,13.18 L8.95,13.18 L8.95,12.02 L9.96,12.02 L10.11,11.57 L10.33,11.14 L9.61,10.43 L10.43,9.61 L11.14,10.33 L11.57,10.11 L12.02,9.96 L12.02,8.95 L13.18,8.95 L13.18,9.96 L13.63,10.11 L14.06,10.33 L14.77,9.61 L15.59,10.43 L14.87,11.14Z" fill="#7fa6c6"/><circle cx="12.6" cy="12.6" r="2.6" fill="#b4d8ee"/><circle cx="12.6" cy="12.6" r="1.1" fill="#fff"/></svg></div><div style="position:absolute;left:135px;top:193px;font-size:12px;line-height:14px;white-space:pre;"><span style="display:inline-block;transform-origin:0 0;transform:scaleX(0.9480)">AppReadiness</span></div><div style="position:absolute;left:349px;top:193px;font-size:12px;line-height:14px;white-space:pre;"><span style="display:inline-block;transform-origin:0 0;transform:scaleX(0.9461)">App Readiness</span></div><div style="position:absolute;left:565px;top:193px;font-size:12px;line-height:14px;white-space:pre;"><span style="display:inline-block;transform-origin:0 0;transform:scaleX(0.9839)">Stopped</span></div><div style="position:absolute;left:665px;top:193px;font-size:12px;line-height:14px;white-space:pre;"><span style="display:inline-block;transform-origin:0 0;transform:scaleX(0.9480)">AppReadiness</span></div><div style="position:absolute;left:117px;top:210px;width:16px;height:16px"><svg width="16" height="16" viewBox="0 0 16 16" style="overflow:visible"><path d="M12.22,5.60 L12.34,6.23 L13.96,6.27 L13.96,7.73 L12.34,7.77 L12.22,8.40 L12.02,9.00 L13.39,9.85 L12.66,11.11 L11.24,10.34 L10.82,10.82 L10.34,11.24 L11.11,12.66 L9.85,13.39 L9.00,12.02 L8.40,12.22 L7.77,12.34 L7.73,13.96 L6.27,13.96 L6.23,12.34 L5.60,12.22 L5.00,12.02 L4.15,13.39 L2.89,12.66 L3.66,11.24 L3.18,10.82 L2.76,10.34 L1.34,11.11 L0.61,9.85 L1.98,9.00 L1.78,8.40 L1.66,7.77 L0.04,7.73 L0.04,6.27 L1.66,6.23 L1.78,5.60 L1.98,5.00 L0.61,4.15 L1.34,2.89 L2.76,3.66 L3.18,3.18 L3.66,2.76 L2.89,1.34 L4.15,0.61 L5.00,1.98 L5.60,1.78 L6.23,1.66 L6.27,0.04 L7.73,0.04 L7.77,1.66 L8.40,1.78 L9.00,1.98 L9.85,0.61 L11.11,1.34 L10.34,2.76 L10.82,3.18 L11.24,3.66 L12.66,2.89 L13.39,4.15 L12.02,5.00Z" fill="#7fa6c6"/><circle cx="7" cy="7" r="5.2" fill="#c4ecf8"/><circle cx="7" cy="7" r="3.3" fill="none" stroke="#6e7880" stroke-width="1.2" stroke-dasharray="2.2 0.5"/><circle cx="7" cy="7" r="2.7" fill="#fff"/><path d="M15.09,11.57 L15.24,12.02 L16.25,12.02 L16.25,13.18 L15.24,13.18 L15.09,13.63 L14.87,14.06 L15.59,14.77 L14.77,15.59 L14.06,14.87 L13.63,15.09 L13.18,15.24 L13.18,16.25 L12.02,16.25 L12.02,15.24 L11.57,15.09 L11.14,14.87 L10.43,15.59 L9.61,14.77 L10.33,14.06 L10.11,13.63 L9.96,13.18 L8.95,13.18 L8.95,12.02 L9.96,12.02 L10.11,11.57 L10.33,11.14 L9.61,10.43 L10.43,9.61 L11.14,10.33 L11.57,10.11 L12.02,9.96 L12.02,8.95 L13.18,8.95 L13.18,9.96 L13.63,10.11 L14.06,10.33 L14.77,9.61 L15.59,10.43 L14.87,11.14Z" fill="#7fa6c6"/><circle cx="12.6" cy="12.6" r="2.6" fill="#b4d8ee"/><circle cx="12.6" cy="12.6" r="1.1" fill="#fff"/></svg></div><div style="position:absolute;left:135px;top:212px;font-size:12px;line-height:14px;white-space:pre;"><span style="display:inline-block;transform-origin:0 0;transform:scaleX(0.9992)">AppVClient</span></div><div style="position:absolute;left:349px;top:212px;font-size:12px;line-height:14px;white-space:pre;"><span style="display:inline-block;transform-origin:0 0;transform:scaleX(1.0192)">Microsoft App-V Client</span></div><div style="position:absolute;left:565px;top:212px;font-size:12px;line-height:14px;white-space:pre;"><span style="display:inline-block;transform-origin:0 0;transform:scaleX(0.9839)">Stopped</span></div><div style="position:absolute;left:117px;top:229px;width:16px;height:16px"><svg width="16" height="16" viewBox="0 0 16 16" style="overflow:visible"><path d="M12.22,5.60 L12.34,6.23 L13.96,6.27 L13.96,7.73 L12.34,7.77 L12.22,8.40 L12.02,9.00 L13.39,9.85 L12.66,11.11 L11.24,10.34 L10.82,10.82 L10.34,11.24 L11.11,12.66 L9.85,13.39 L9.00,12.02 L8.40,12.22 L7.77,12.34 L7.73,13.96 L6.27,13.96 L6.23,12.34 L5.60,12.22 L5.00,12.02 L4.15,13.39 L2.89,12.66 L3.66,11.24 L3.18,10.82 L2.76,10.34 L1.34,11.11 L0.61,9.85 L1.98,9.00 L1.78,8.40 L1.66,7.77 L0.04,7.73 L0.04,6.27 L1.66,6.23 L1.78,5.60 L1.98,5.00 L0.61,4.15 L1.34,2.89 L2.76,3.66 L3.18,3.18 L3.66,2.76 L2.89,1.34 L4.15,0.61 L5.00,1.98 L5.60,1.78 L6.23,1.66 L6.27,0.04 L7.73,0.04 L7.77,1.66 L8.40,1.78 L9.00,1.98 L9.85,0.61 L11.11,1.34 L10.34,2.76 L10.82,3.18 L11.24,3.66 L12.66,2.89 L13.39,4.15 L12.02,5.00Z" fill="#7fa6c6"/><circle cx="7" cy="7" r="5.2" fill="#c4ecf8"/><circle cx="7" cy="7" r="3.3" fill="none" stroke="#6e7880" stroke-width="1.2" stroke-dasharray="2.2 0.5"/><circle cx="7" cy="7" r="2.7" fill="#fff"/><path d="M15.09,11.57 L15.24,12.02 L16.25,12.02 L16.25,13.18 L15.24,13.18 L15.09,13.63 L14.87,14.06 L15.59,14.77 L14.77,15.59 L14.06,14.87 L13.63,15.09 L13.18,15.24 L13.18,16.25 L12.02,16.25 L12.02,15.24 L11.57,15.09 L11.14,14.87 L10.43,15.59 L9.61,14.77 L10.33,14.06 L10.11,13.63 L9.96,13.18 L8.95,13.18 L8.95,12.02 L9.96,12.02 L10.11,11.57 L10.33,11.14 L9.61,10.43 L10.43,9.61 L11.14,10.33 L11.57,10.11 L12.02,9.96 L12.02,8.95 L13.18,8.95 L13.18,9.96 L13.63,10.11 L14.06,10.33 L14.77,9.61 L15.59,10.43 L14.87,11.14Z" fill="#7fa6c6"/><circle cx="12.6" cy="12.6" r="2.6" fill="#b4d8ee"/><circle cx="12.6" cy="12.6" r="1.1" fill="#fff"/></svg></div><div style="position:absolute;left:135px;top:231px;font-size:12px;line-height:14px;white-space:pre;"><span style="display:inline-block;transform-origin:0 0;transform:scaleX(0.9522)">AppXSvc</span></div><div style="position:absolute;left:299px;top:231px;font-size:12px;line-height:14px;white-space:pre;"><span style="display:inline-block;transform-origin:0 0;transform:scaleX(0.8988)">4592</span></div><div style="position:absolute;left:349px;top:231px;font-size:12px;line-height:14px;white-space:pre;"><span style="display:inline-block;transform-origin:0 0;transform:scaleX(0.9638)">AppX Deployment Service (AppXSVC)</span></div><div style="position:absolute;left:565px;top:231px;font-size:12px;line-height:14px;white-space:pre;"><span style="display:inline-block;transform-origin:0 0;transform:scaleX(1.0066)">Running</span></div><div style="position:absolute;left:665px;top:231px;font-size:12px;line-height:14px;white-space:pre;"><span style="display:inline-block;transform-origin:0 0;transform:scaleX(0.9831)">wsappx</span></div><div style="position:absolute;left:117px;top:248px;width:16px;height:16px"><svg width="16" height="16" viewBox="0 0 16 16" style="overflow:visible"><path d="M12.22,5.60 L12.34,6.23 L13.96,6.27 L13.96,7.73 L12.34,7.77 L12.22,8.40 L12.02,9.00 L13.39,9.85 L12.66,11.11 L11.24,10.34 L10.82,10.82 L10.34,11.24 L11.11,12.66 L9.85,13.39 L9.00,12.02 L8.40,12.22 L7.77,12.34 L7.73,13.96 L6.27,13.96 L6.23,12.34 L5.60,12.22 L5.00,12.02 L4.15,13.39 L2.89,12.66 L3.66,11.24 L3.18,10.82 L2.76,10.34 L1.34,11.11 L0.61,9.85 L1.98,9.00 L1.78,8.40 L1.66,7.77 L0.04,7.73 L0.04,6.27 L1.66,6.23 L1.78,5.60 L1.98,5.00 L0.61,4.15 L1.34,2.89 L2.76,3.66 L3.18,3.18 L3.66,2.76 L2.89,1.34 L4.15,0.61 L5.00,1.98 L5.60,1.78 L6.23,1.66 L6.27,0.04 L7.73,0.04 L7.77,1.66 L8.40,1.78 L9.00,1.98 L9.85,0.61 L11.11,1.34 L10.34,2.76 L10.82,3.18 L11.24,3.66 L12.66,2.89 L13.39,4.15 L12.02,5.00Z" fill="#7fa6c6"/><circle cx="7" cy="7" r="5.2" fill="#c4ecf8"/><circle cx="7" cy="7" r="3.3" fill="none" stroke="#6e7880" stroke-width="1.2" stroke-dasharray="2.2 0.5"/><circle cx="7" cy="7" r="2.7" fill="#fff"/><path d="M15.09,11.57 L15.24,12.02 L16.25,12.02 L16.25,13.18 L15.24,13.18 L15.09,13.63 L14.87,14.06 L15.59,14.77 L14.77,15.59 L14.06,14.87 L13.63,15.09 L13.18,15.24 L13.18,16.25 L12.02,16.25 L12.02,15.24 L11.57,15.09 L11.14,14.87 L10.43,15.59 L9.61,14.77 L10.33,14.06 L10.11,13.63 L9.96,13.18 L8.95,13.18 L8.95,12.02 L9.96,12.02 L10.11,11.57 L10.33,11.14 L9.61,10.43 L10.43,9.61 L11.14,10.33 L11.57,10.11 L12.02,9.96 L12.02,8.95 L13.18,8.95 L13.18,9.96 L13.63,10.11 L14.06,10.33 L14.77,9.61 L15.59,10.43 L14.87,11.14Z" fill="#7fa6c6"/><circle cx="12.6" cy="12.6" r="2.6" fill="#b4d8ee"/><circle cx="12.6" cy="12.6" r="1.1" fill="#fff"/></svg></div><div style="position:absolute;left:135px;top:250px;font-size:12px;line-height:14px;white-space:pre;"><span style="display:inline-block;transform-origin:0 0;transform:scaleX(0.9587)">AssignedAccessManagerSvc</span></div><div style="position:absolute;left:349px;top:250px;font-size:12px;line-height:14px;white-space:pre;"><span style="display:inline-block;transform-origin:0 0;transform:scaleX(0.9566)">AssignedAccessManager Service</span></div><div style="position:absolute;left:565px;top:250px;font-size:12px;line-height:14px;white-space:pre;"><span style="display:inline-block;transform-origin:0 0;transform:scaleX(0.9839)">Stopped</span></div><div style="position:absolute;left:665px;top:250px;font-size:12px;line-height:14px;white-space:pre;"><span style="display:inline-block;transform-origin:0 0;transform:scaleX(0.9646)">AssignedAcce...</span></div><div style="position:absolute;left:117px;top:267px;width:16px;height:16px"><svg width="16" height="16" viewBox="0 0 16 16" style="overflow:visible"><path d="M12.22,5.60 L12.34,6.23 L13.96,6.27 L13.96,7.73 L12.34,7.77 L12.22,8.40 L12.02,9.00 L13.39,9.85 L12.66,11.11 L11.24,10.34 L10.82,10.82 L10.34,11.24 L11.11,12.66 L9.85,13.39 L9.00,12.02 L8.40,12.22 L7.77,12.34 L7.73,13.96 L6.27,13.96 L6.23,12.34 L5.60,12.22 L5.00,12.02 L4.15,13.39 L2.89,12.66 L3.66,11.24 L3.18,10.82 L2.76,10.34 L1.34,11.11 L0.61,9.85 L1.98,9.00 L1.78,8.40 L1.66,7.77 L0.04,7.73 L0.04,6.27 L1.66,6.23 L1.78,5.60 L1.98,5.00 L0.61,4.15 L1.34,2.89 L2.76,3.66 L3.18,3.18 L3.66,2.76 L2.89,1.34 L4.15,0.61 L5.00,1.98 L5.60,1.78 L6.23,1.66 L6.27,0.04 L7.73,0.04 L7.77,1.66 L8.40,1.78 L9.00,1.98 L9.85,0.61 L11.11,1.34 L10.34,2.76 L10.82,3.18 L11.24,3.66 L12.66,2.89 L13.39,4.15 L12.02,5.00Z" fill="#7fa6c6"/><circle cx="7" cy="7" r="5.2" fill="#c4ecf8"/><circle cx="7" cy="7" r="3.3" fill="none" stroke="#6e7880" stroke-width="1.2" stroke-dasharray="2.2 0.5"/><circle cx="7" cy="7" r="2.7" fill="#fff"/><path d="M15.09,11.57 L15.24,12.02 L16.25,12.02 L16.25,13.18 L15.24,13.18 L15.09,13.63 L14.87,14.06 L15.59,14.77 L14.77,15.59 L14.06,14.87 L13.63,15.09 L13.18,15.24 L13.18,16.25 L12.02,16.25 L12.02,15.24 L11.57,15.09 L11.14,14.87 L10.43,15.59 L9.61,14.77 L10.33,14.06 L10.11,13.63 L9.96,13.18 L8.95,13.18 L8.95,12.02 L9.96,12.02 L10.11,11.57 L10.33,11.14 L9.61,10.43 L10.43,9.61 L11.14,10.33 L11.57,10.11 L12.02,9.96 L12.02,8.95 L13.18,8.95 L13.18,9.96 L13.63,10.11 L14.06,10.33 L14.77,9.61 L15.59,10.43 L14.87,11.14Z" fill="#7fa6c6"/><circle cx="12.6" cy="12.6" r="2.6" fill="#b4d8ee"/><circle cx="12.6" cy="12.6" r="1.1" fill="#fff"/></svg></div><div style="position:absolute;left:135px;top:269px;font-size:12px;line-height:14px;white-space:pre;"><span style="display:inline-block;transform-origin:0 0;transform:scaleX(1.0137)">AudioEndpointBuilder</span></div><div style="position:absolute;left:299px;top:269px;font-size:12px;line-height:14px;white-space:pre;"><span style="display:inline-block;transform-origin:0 0;transform:scaleX(0.8988)">2040</span></div><div style="position:absolute;left:349px;top:269px;font-size:12px;line-height:14px;white-space:pre;"><span style="display:inline-block;transform-origin:0 0;transform:scaleX(1.0090)">Windows Audio Endpoint Builder</span></div><div style="position:absolute;left:565px;top:269px;font-size:12px;line-height:14px;white-space:pre;"><span style="display:inline-block;transform-origin:0 0;transform:scaleX(1.0066)">Running</span></div><div style="position:absolute;left:665px;top:269px;font-size:12px;line-height:14px;white-space:pre;"><span style="display:inline-block;transform-origin:0 0;transform:scaleX(0.9614)">LocalSystemN...</span></div><div style="position:absolute;left:117px;top:286px;width:16px;height:16px"><svg width="16" height="16" viewBox="0 0 16 16" style="overflow:visible"><path d="M12.22,5.60 L12.34,6.23 L13.96,6.27 L13.96,7.73 L12.34,7.77 L12.22,8.40 L12.02,9.00 L13.39,9.85 L12.66,11.11 L11.24,10.34 L10.82,10.82 L10.34,11.24 L11.11,12.66 L9.85,13.39 L9.00,12.02 L8.40,12.22 L7.77,12.34 L7.73,13.96 L6.27,13.96 L6.23,12.34 L5.60,12.22 L5.00,12.02 L4.15,13.39 L2.89,12.66 L3.66,11.24 L3.18,10.82 L2.76,10.34 L1.34,11.11 L0.61,9.85 L1.98,9.00 L1.78,8.40 L1.66,7.77 L0.04,7.73 L0.04,6.27 L1.66,6.23 L1.78,5.60 L1.98,5.00 L0.61,4.15 L1.34,2.89 L2.76,3.66 L3.18,3.18 L3.66,2.76 L2.89,1.34 L4.15,0.61 L5.00,1.98 L5.60,1.78 L6.23,1.66 L6.27,0.04 L7.73,0.04 L7.77,1.66 L8.40,1.78 L9.00,1.98 L9.85,0.61 L11.11,1.34 L10.34,2.76 L10.82,3.18 L11.24,3.66 L12.66,2.89 L13.39,4.15 L12.02,5.00Z" fill="#7fa6c6"/><circle cx="7" cy="7" r="5.2" fill="#c4ecf8"/><circle cx="7" cy="7" r="3.3" fill="none" stroke="#6e7880" stroke-width="1.2" stroke-dasharray="2.2 0.5"/><circle cx="7" cy="7" r="2.7" fill="#fff"/><path d="M15.09,11.57 L15.24,12.02 L16.25,12.02 L16.25,13.18 L15.24,13.18 L15.09,13.63 L14.87,14.06 L15.59,14.77 L14.77,15.59 L14.06,14.87 L13.63,15.09 L13.18,15.24 L13.18,16.25 L12.02,16.25 L12.02,15.24 L11.57,15.09 L11.14,14.87 L10.43,15.59 L9.61,14.77 L10.33,14.06 L10.11,13.63 L9.96,13.18 L8.95,13.18 L8.95,12.02 L9.96,12.02 L10.11,11.57 L10.33,11.14 L9.61,10.43 L10.43,9.61 L11.14,10.33 L11.57,10.11 L12.02,9.96 L12.02,8.95 L13.18,8.95 L13.18,9.96 L13.63,10.11 L14.06,10.33 L14.77,9.61 L15.59,10.43 L14.87,11.14Z" fill="#7fa6c6"/><circle cx="12.6" cy="12.6" r="2.6" fill="#b4d8ee"/><circle cx="12.6" cy="12.6" r="1.1" fill="#fff"/></svg></div><div style="position:absolute;left:135px;top:288px;font-size:12px;line-height:14px;white-space:pre;"><span style="display:inline-block;transform-origin:0 0;transform:scaleX(1.0067)">Audiosrv</span></div><div style="position:absolute;left:299px;top:288px;font-size:12px;line-height:14px;white-space:pre;"><span style="display:inline-block;transform-origin:0 0;transform:scaleX(0.8988)">2260</span></div><div style="position:absolute;left:349px;top:288px;font-size:12px;line-height:14px;white-space:pre;"><span style="display:inline-block;transform-origin:0 0;transform:scaleX(1.0238)">Windows Audio</span></div><div style="position:absolute;left:565px;top:288px;font-size:12px;line-height:14px;white-space:pre;"><span style="display:inline-block;transform-origin:0 0;transform:scaleX(1.0066)">Running</span></div><div style="position:absolute;left:665px;top:288px;font-size:12px;line-height:14px;white-space:pre;"><span style="display:inline-block;transform-origin:0 0;transform:scaleX(0.9499)">LocalServiceN...</span></div><div style="position:absolute;left:117px;top:305px;width:16px;height:16px"><svg width="16" height="16" viewBox="0 0 16 16" style="overflow:visible"><path d="M12.22,5.60 L12.34,6.23 L13.96,6.27 L13.96,7.73 L12.34,7.77 L12.22,8.40 L12.02,9.00 L13.39,9.85 L12.66,11.11 L11.24,10.34 L10.82,10.82 L10.34,11.24 L11.11,12.66 L9.85,13.39 L9.00,12.02 L8.40,12.22 L7.77,12.34 L7.73,13.96 L6.27,13.96 L6.23,12.34 L5.60,12.22 L5.00,12.02 L4.15,13.39 L2.89,12.66 L3.66,11.24 L3.18,10.82 L2.76,10.34 L1.34,11.11 L0.61,9.85 L1.98,9.00 L1.78,8.40 L1.66,7.77 L0.04,7.73 L0.04,6.27 L1.66,6.23 L1.78,5.60 L1.98,5.00 L0.61,4.15 L1.34,2.89 L2.76,3.66 L3.18,3.18 L3.66,2.76 L2.89,1.34 L4.15,0.61 L5.00,1.98 L5.60,1.78 L6.23,1.66 L6.27,0.04 L7.73,0.04 L7.77,1.66 L8.40,1.78 L9.00,1.98 L9.85,0.61 L11.11,1.34 L10.34,2.76 L10.82,3.18 L11.24,3.66 L12.66,2.89 L13.39,4.15 L12.02,5.00Z" fill="#7fa6c6"/><circle cx="7" cy="7" r="5.2" fill="#c4ecf8"/><circle cx="7" cy="7" r="3.3" fill="none" stroke="#6e7880" stroke-width="1.2" stroke-dasharray="2.2 0.5"/><circle cx="7" cy="7" r="2.7" fill="#fff"/><path d="M15.09,11.57 L15.24,12.02 L16.25,12.02 L16.25,13.18 L15.24,13.18 L15.09,13.63 L14.87,14.06 L15.59,14.77 L14.77,15.59 L14.06,14.87 L13.63,15.09 L13.18,15.24 L13.18,16.25 L12.02,16.25 L12.02,15.24 L11.57,15.09 L11.14,14.87 L10.43,15.59 L9.61,14.77 L10.33,14.06 L10.11,13.63 L9.96,13.18 L8.95,13.18 L8.95,12.02 L9.96,12.02 L10.11,11.57 L10.33,11.14 L9.61,10.43 L10.43,9.61 L11.14,10.33 L11.57,10.11 L12.02,9.96 L12.02,8.95 L13.18,8.95 L13.18,9.96 L13.63,10.11 L14.06,10.33 L14.77,9.61 L15.59,10.43 L14.87,11.14Z" fill="#7fa6c6"/><circle cx="12.6" cy="12.6" r="2.6" fill="#b4d8ee"/><circle cx="12.6" cy="12.6" r="1.1" fill="#fff"/></svg></div><div style="position:absolute;left:135px;top:307px;font-size:12px;line-height:14px;white-space:pre;"><span style="display:inline-block;transform-origin:0 0;transform:scaleX(1.0151)">autotimesvc</span></div><div style="position:absolute;left:349px;top:307px;font-size:12px;line-height:14px;white-space:pre;"><span style="display:inline-block;transform-origin:0 0;transform:scaleX(0.9853)">Cellular Time</span></div><div style="position:absolute;left:565px;top:307px;font-size:12px;line-height:14px;white-space:pre;"><span style="display:inline-block;transform-origin:0 0;transform:scaleX(0.9839)">Stopped</span></div><div style="position:absolute;left:665px;top:307px;font-size:12px;line-height:14px;white-space:pre;"><span style="display:inline-block;transform-origin:0 0;transform:scaleX(0.9771)">autoTimeSvc</span></div><div style="position:absolute;left:117px;top:324px;width:16px;height:16px"><svg width="16" height="16" viewBox="0 0 16 16" style="overflow:visible"><path d="M12.22,5.60 L12.34,6.23 L13.96,6.27 L13.96,7.73 L12.34,7.77 L12.22,8.40 L12.02,9.00 L13.39,9.85 L12.66,11.11 L11.24,10.34 L10.82,10.82 L10.34,11.24 L11.11,12.66 L9.85,13.39 L9.00,12.02 L8.40,12.22 L7.77,12.34 L7.73,13.96 L6.27,13.96 L6.23,12.34 L5.60,12.22 L5.00,12.02 L4.15,13.39 L2.89,12.66 L3.66,11.24 L3.18,10.82 L2.76,10.34 L1.34,11.11 L0.61,9.85 L1.98,9.00 L1.78,8.40 L1.66,7.77 L0.04,7.73 L0.04,6.27 L1.66,6.23 L1.78,5.60 L1.98,5.00 L0.61,4.15 L1.34,2.89 L2.76,3.66 L3.18,3.18 L3.66,2.76 L2.89,1.34 L4.15,0.61 L5.00,1.98 L5.60,1.78 L6.23,1.66 L6.27,0.04 L7.73,0.04 L7.77,1.66 L8.40,1.78 L9.00,1.98 L9.85,0.61 L11.11,1.34 L10.34,2.76 L10.82,3.18 L11.24,3.66 L12.66,2.89 L13.39,4.15 L12.02,5.00Z" fill="#7fa6c6"/><circle cx="7" cy="7" r="5.2" fill="#c4ecf8"/><circle cx="7" cy="7" r="3.3" fill="none" stroke="#6e7880" stroke-width="1.2" stroke-dasharray="2.2 0.5"/><circle cx="7" cy="7" r="2.7" fill="#fff"/><path d="M15.09,11.57 L15.24,12.02 L16.25,12.02 L16.25,13.18 L15.24,13.18 L15.09,13.63 L14.87,14.06 L15.59,14.77 L14.77,15.59 L14.06,14.87 L13.63,15.09 L13.18,15.24 L13.18,16.25 L12.02,16.25 L12.02,15.24 L11.57,15.09 L11.14,14.87 L10.43,15.59 L9.61,14.77 L10.33,14.06 L10.11,13.63 L9.96,13.18 L8.95,13.18 L8.95,12.02 L9.96,12.02 L10.11,11.57 L10.33,11.14 L9.61,10.43 L10.43,9.61 L11.14,10.33 L11.57,10.11 L12.02,9.96 L12.02,8.95 L13.18,8.95 L13.18,9.96 L13.63,10.11 L14.06,10.33 L14.77,9.61 L15.59,10.43 L14.87,11.14Z" fill="#7fa6c6"/><circle cx="12.6" cy="12.6" r="2.6" fill="#b4d8ee"/><circle cx="12.6" cy="12.6" r="1.1" fill="#fff"/></svg></div><div style="position:absolute;left:135px;top:326px;font-size:12px;line-height:14px;white-space:pre;"><span style="display:inline-block;transform-origin:0 0;transform:scaleX(0.9319)">AxInstSV</span></div><div style="position:absolute;left:349px;top:326px;font-size:12px;line-height:14px;white-space:pre;"><span style="display:inline-block;transform-origin:0 0;transform:scaleX(0.9610)">ActiveX Installer (AxInstSV)</span></div><div style="position:absolute;left:565px;top:326px;font-size:12px;line-height:14px;white-space:pre;"><span style="display:inline-block;transform-origin:0 0;transform:scaleX(0.9839)">Stopped</span></div><div style="position:absolute;left:665px;top:326px;font-size:12px;line-height:14px;white-space:pre;"><span style="display:inline-block;transform-origin:0 0;transform:scaleX(0.9550)">AxInstSVGroup</span></div><div style="position:absolute;left:117px;top:343px;width:16px;height:16px"><svg width="16" height="16" viewBox="0 0 16 16" style="overflow:visible"><path d="M12.22,5.60 L12.34,6.23 L13.96,6.27 L13.96,7.73 L12.34,7.77 L12.22,8.40 L12.02,9.00 L13.39,9.85 L12.66,11.11 L11.24,10.34 L10.82,10.82 L10.34,11.24 L11.11,12.66 L9.85,13.39 L9.00,12.02 L8.40,12.22 L7.77,12.34 L7.73,13.96 L6.27,13.96 L6.23,12.34 L5.60,12.22 L5.00,12.02 L4.15,13.39 L2.89,12.66 L3.66,11.24 L3.18,10.82 L2.76,10.34 L1.34,11.11 L0.61,9.85 L1.98,9.00 L1.78,8.40 L1.66,7.77 L0.04,7.73 L0.04,6.27 L1.66,6.23 L1.78,5.60 L1.98,5.00 L0.61,4.15 L1.34,2.89 L2.76,3.66 L3.18,3.18 L3.66,2.76 L2.89,1.34 L4.15,0.61 L5.00,1.98 L5.60,1.78 L6.23,1.66 L6.27,0.04 L7.73,0.04 L7.77,1.66 L8.40,1.78 L9.00,1.98 L9.85,0.61 L11.11,1.34 L10.34,2.76 L10.82,3.18 L11.24,3.66 L12.66,2.89 L13.39,4.15 L12.02,5.00Z" fill="#7fa6c6"/><circle cx="7" cy="7" r="5.2" fill="#c4ecf8"/><circle cx="7" cy="7" r="3.3" fill="none" stroke="#6e7880" stroke-width="1.2" stroke-dasharray="2.2 0.5"/><circle cx="7" cy="7" r="2.7" fill="#fff"/><path d="M15.09,11.57 L15.24,12.02 L16.25,12.02 L16.25,13.18 L15.24,13.18 L15.09,13.63 L14.87,14.06 L15.59,14.77 L14.77,15.59 L14.06,14.87 L13.63,15.09 L13.18,15.24 L13.18,16.25 L12.02,16.25 L12.02,15.24 L11.57,15.09 L11.14,14.87 L10.43,15.59 L9.61,14.77 L10.33,14.06 L10.11,13.63 L9.96,13.18 L8.95,13.18 L8.95,12.02 L9.96,12.02 L10.11,11.57 L10.33,11.14 L9.61,10.43 L10.43,9.61 L11.14,10.33 L11.57,10.11 L12.02,9.96 L12.02,8.95 L13.18,8.95 L13.18,9.96 L13.63,10.11 L14.06,10.33 L14.77,9.61 L15.59,10.43 L14.87,11.14Z" fill="#7fa6c6"/><circle cx="12.6" cy="12.6" r="2.6" fill="#b4d8ee"/><circle cx="12.6" cy="12.6" r="1.1" fill="#fff"/></svg></div><div style="position:absolute;left:135px;top:345px;font-size:12px;line-height:14px;white-space:pre;"><span style="display:inline-block;transform-origin:0 0;transform:scaleX(0.9113)">BcastDVRUserService</span></div><div style="position:absolute;left:349px;top:345px;font-size:12px;line-height:14px;white-space:pre;"><span style="display:inline-block;transform-origin:0 0;transform:scaleX(0.9348)">GameDVR and Broadcast User Service</span></div><div style="position:absolute;left:565px;top:345px;font-size:12px;line-height:14px;white-space:pre;"><span style="display:inline-block;transform-origin:0 0;transform:scaleX(0.9839)">Stopped</span></div><div style="position:absolute;left:665px;top:345px;font-size:12px;line-height:14px;white-space:pre;"><span style="display:inline-block;transform-origin:0 0;transform:scaleX(0.9108)">BcastDVRUser...</span></div><div style="position:absolute;left:117px;top:362px;width:16px;height:16px"><svg width="16" height="16" viewBox="0 0 16 16" style="overflow:visible"><path d="M12.22,5.60 L12.34,6.23 L13.96,6.27 L13.96,7.73 L12.34,7.77 L12.22,8.40 L12.02,9.00 L13.39,9.85 L12.66,11.11 L11.24,10.34 L10.82,10.82 L10.34,11.24 L11.11,12.66 L9.85,13.39 L9.00,12.02 L8.40,12.22 L7.77,12.34 L7.73,13.96 L6.27,13.96 L6.23,12.34 L5.60,12.22 L5.00,12.02 L4.15,13.39 L2.89,12.66 L3.66,11.24 L3.18,10.82 L2.76,10.34 L1.34,11.11 L0.61,9.85 L1.98,9.00 L1.78,8.40 L1.66,7.77 L0.04,7.73 L0.04,6.27 L1.66,6.23 L1.78,5.60 L1.98,5.00 L0.61,4.15 L1.34,2.89 L2.76,3.66 L3.18,3.18 L3.66,2.76 L2.89,1.34 L4.15,0.61 L5.00,1.98 L5.60,1.78 L6.23,1.66 L6.27,0.04 L7.73,0.04 L7.77,1.66 L8.40,1.78 L9.00,1.98 L9.85,0.61 L11.11,1.34 L10.34,2.76 L10.82,3.18 L11.24,3.66 L12.66,2.89 L13.39,4.15 L12.02,5.00Z" fill="#7fa6c6"/><circle cx="7" cy="7" r="5.2" fill="#c4ecf8"/><circle cx="7" cy="7" r="3.3" fill="none" stroke="#6e7880" stroke-width="1.2" stroke-dasharray="2.2 0.5"/><circle cx="7" cy="7" r="2.7" fill="#fff"/><path d="M15.09,11.57 L15.24,12.02 L16.25,12.02 L16.25,13.18 L15.24,13.18 L15.09,13.63 L14.87,14.06 L15.59,14.77 L14.77,15.59 L14.06,14.87 L13.63,15.09 L13.18,15.24 L13.18,16.25 L12.02,16.25 L12.02,15.24 L11.57,15.09 L11.14,14.87 L10.43,15.59 L9.61,14.77 L10.33,14.06 L10.11,13.63 L9.96,13.18 L8.95,13.18 L8.95,12.02 L9.96,12.02 L10.11,11.57 L10.33,11.14 L9.61,10.43 L10.43,9.61 L11.14,10.33 L11.57,10.11 L12.02,9.96 L12.02,8.95 L13.18,8.95 L13.18,9.96 L13.63,10.11 L14.06,10.33 L14.77,9.61 L15.59,10.43 L14.87,11.14Z" fill="#7fa6c6"/><circle cx="12.6" cy="12.6" r="2.6" fill="#b4d8ee"/><circle cx="12.6" cy="12.6" r="1.1" fill="#fff"/></svg></div><div style="position:absolute;left:135px;top:364px;font-size:12px;line-height:14px;white-space:pre;"><span style="display:inline-block;transform-origin:0 0;transform:scaleX(0.9020)">BcastDVRUserService_4074a</span></div><div style="position:absolute;left:349px;top:364px;font-size:12px;line-height:14px;white-space:pre;"><span style="display:inline-block;transform-origin:0 0;transform:scaleX(0.9342)">GameDVR and Broadcast User Servic...</span></div><div style="position:absolute;left:565px;top:364px;font-size:12px;line-height:14px;white-space:pre;"><span style="display:inline-block;transform-origin:0 0;transform:scaleX(0.9839)">Stopped</span></div><div style="position:absolute;left:665px;top:364px;font-size:12px;line-height:14px;white-space:pre;"><span style="display:inline-block;transform-origin:0 0;transform:scaleX(0.9108)">BcastDVRUser...</span></div><div style="position:absolute;left:117px;top:381px;width:16px;height:16px"><svg width="16" height="16" viewBox="0 0 16 16" style="overflow:visible"><path d="M12.22,5.60 L12.34,6.23 L13.96,6.27 L13.96,7.73 L12.34,7.77 L12.22,8.40 L12.02,9.00 L13.39,9.85 L12.66,11.11 L11.24,10.34 L10.82,10.82 L10.34,11.24 L11.11,12.66 L9.85,13.39 L9.00,12.02 L8.40,12.22 L7.77,12.34 L7.73,13.96 L6.27,13.96 L6.23,12.34 L5.60,12.22 L5.00,12.02 L4.15,13.39 L2.89,12.66 L3.66,11.24 L3.18,10.82 L2.76,10.34 L1.34,11.11 L0.61,9.85 L1.98,9.00 L1.78,8.40 L1.66,7.77 L0.04,7.73 L0.04,6.27 L1.66,6.23 L1.78,5.60 L1.98,5.00 L0.61,4.15 L1.34,2.89 L2.76,3.66 L3.18,3.18 L3.66,2.76 L2.89,1.34 L4.15,0.61 L5.00,1.98 L5.60,1.78 L6.23,1.66 L6.27,0.04 L7.73,0.04 L7.77,1.66 L8.40,1.78 L9.00,1.98 L9.85,0.61 L11.11,1.34 L10.34,2.76 L10.82,3.18 L11.24,3.66 L12.66,2.89 L13.39,4.15 L12.02,5.00Z" fill="#7fa6c6"/><circle cx="7" cy="7" r="5.2" fill="#c4ecf8"/><circle cx="7" cy="7" r="3.3" fill="none" stroke="#6e7880" stroke-width="1.2" stroke-dasharray="2.2 0.5"/><circle cx="7" cy="7" r="2.7" fill="#fff"/><path d="M15.09,11.57 L15.24,12.02 L16.25,12.02 L16.25,13.18 L15.24,13.18 L15.09,13.63 L14.87,14.06 L15.59,14.77 L14.77,15.59 L14.06,14.87 L13.63,15.09 L13.18,15.24 L13.18,16.25 L12.02,16.25 L12.02,15.24 L11.57,15.09 L11.14,14.87 L10.43,15.59 L9.61,14.77 L10.33,14.06 L10.11,13.63 L9.96,13.18 L8.95,13.18 L8.95,12.02 L9.96,12.02 L10.11,11.57 L10.33,11.14 L9.61,10.43 L10.43,9.61 L11.14,10.33 L11.57,10.11 L12.02,9.96 L12.02,8.95 L13.18,8.95 L13.18,9.96 L13.63,10.11 L14.06,10.33 L14.77,9.61 L15.59,10.43 L14.87,11.14Z" fill="#7fa6c6"/><circle cx="12.6" cy="12.6" r="2.6" fill="#b4d8ee"/><circle cx="12.6" cy="12.6" r="1.1" fill="#fff"/></svg></div><div style="position:absolute;left:135px;top:383px;font-size:12px;line-height:14px;white-space:pre;"><span style="display:inline-block;transform-origin:0 0;transform:scaleX(0.8509)">BDESVC</span></div><div style="position:absolute;left:349px;top:383px;font-size:12px;line-height:14px;white-space:pre;"><span style="display:inline-block;transform-origin:0 0;transform:scaleX(0.9690)">BitLocker Drive Encryption Service</span></div><div style="position:absolute;left:565px;top:383px;font-size:12px;line-height:14px;white-space:pre;"><span style="display:inline-block;transform-origin:0 0;transform:scaleX(0.9839)">Stopped</span></div><div style="position:absolute;left:665px;top:383px;font-size:12px;line-height:14px;white-space:pre;"><span style="display:inline-block;transform-origin:0 0;transform:scaleX(0.9585)">netsvcs</span></div><div style="position:absolute;left:117px;top:400px;width:16px;height:16px"><svg width="16" height="16" viewBox="0 0 16 16" style="overflow:visible"><path d="M12.22,5.60 L12.34,6.23 L13.96,6.27 L13.96,7.73 L12.34,7.77 L12.22,8.40 L12.02,9.00 L13.39,9.85 L12.66,11.11 L11.24,10.34 L10.82,10.82 L10.34,11.24 L11.11,12.66 L9.85,13.39 L9.00,12.02 L8.40,12.22 L7.77,12.34 L7.73,13.96 L6.27,13.96 L6.23,12.34 L5.60,12.22 L5.00,12.02 L4.15,13.39 L2.89,12.66 L3.66,11.24 L3.18,10.82 L2.76,10.34 L1.34,11.11 L0.61,9.85 L1.98,9.00 L1.78,8.40 L1.66,7.77 L0.04,7.73 L0.04,6.27 L1.66,6.23 L1.78,5.60 L1.98,5.00 L0.61,4.15 L1.34,2.89 L2.76,3.66 L3.18,3.18 L3.66,2.76 L2.89,1.34 L4.15,0.61 L5.00,1.98 L5.60,1.78 L6.23,1.66 L6.27,0.04 L7.73,0.04 L7.77,1.66 L8.40,1.78 L9.00,1.98 L9.85,0.61 L11.11,1.34 L10.34,2.76 L10.82,3.18 L11.24,3.66 L12.66,2.89 L13.39,4.15 L12.02,5.00Z" fill="#7fa6c6"/><circle cx="7" cy="7" r="5.2" fill="#c4ecf8"/><circle cx="7" cy="7" r="3.3" fill="none" stroke="#6e7880" stroke-width="1.2" stroke-dasharray="2.2 0.5"/><circle cx="7" cy="7" r="2.7" fill="#fff"/><path d="M15.09,11.57 L15.24,12.02 L16.25,12.02 L16.25,13.18 L15.24,13.18 L15.09,13.63 L14.87,14.06 L15.59,14.77 L14.77,15.59 L14.06,14.87 L13.63,15.09 L13.18,15.24 L13.18,16.25 L12.02,16.25 L12.02,15.24 L11.57,15.09 L11.14,14.87 L10.43,15.59 L9.61,14.77 L10.33,14.06 L10.11,13.63 L9.96,13.18 L8.95,13.18 L8.95,12.02 L9.96,12.02 L10.11,11.57 L10.33,11.14 L9.61,10.43 L10.43,9.61 L11.14,10.33 L11.57,10.11 L12.02,9.96 L12.02,8.95 L13.18,8.95 L13.18,9.96 L13.63,10.11 L14.06,10.33 L14.77,9.61 L15.59,10.43 L14.87,11.14Z" fill="#7fa6c6"/><circle cx="12.6" cy="12.6" r="2.6" fill="#b4d8ee"/><circle cx="12.6" cy="12.6" r="1.1" fill="#fff"/></svg></div><div style="position:absolute;left:135px;top:402px;font-size:12px;line-height:14px;white-space:pre;"><span style="display:inline-block;transform-origin:0 0;transform:scaleX(0.8139)">BFE</span></div><div style="position:absolute;left:299px;top:402px;font-size:12px;line-height:14px;white-space:pre;"><span style="display:inline-block;transform-origin:0 0;transform:scaleX(0.8988)">2752</span></div><div style="position:absolute;left:349px;top:402px;font-size:12px;line-height:14px;white-space:pre;"><span style="display:inline-block;transform-origin:0 0;transform:scaleX(0.9555)">Base Filtering Engine</span></div><div style="position:absolute;left:565px;top:402px;font-size:12px;line-height:14px;white-space:pre;"><span style="display:inline-block;transform-origin:0 0;transform:scaleX(1.0066)">Running</span></div><div style="position:absolute;left:665px;top:402px;font-size:12px;line-height:14px;white-space:pre;"><span style="display:inline-block;transform-origin:0 0;transform:scaleX(0.9499)">LocalServiceN...</span></div><div style="position:absolute;left:117px;top:419px;width:16px;height:16px"><svg width="16" height="16" viewBox="0 0 16 16" style="overflow:visible"><path d="M12.22,5.60 L12.34,6.23 L13.96,6.27 L13.96,7.73 L12.34,7.77 L12.22,8.40 L12.02,9.00 L13.39,9.85 L12.66,11.11 L11.24,10.34 L10.82,10.82 L10.34,11.24 L11.11,12.66 L9.85,13.39 L9.00,12.02 L8.40,12.22 L7.77,12.34 L7.73,13.96 L6.27,13.96 L6.23,12.34 L5.60,12.22 L5.00,12.02 L4.15,13.39 L2.89,12.66 L3.66,11.24 L3.18,10.82 L2.76,10.34 L1.34,11.11 L0.61,9.85 L1.98,9.00 L1.78,8.40 L1.66,7.77 L0.04,7.73 L0.04,6.27 L1.66,6.23 L1.78,5.60 L1.98,5.00 L0.61,4.15 L1.34,2.89 L2.76,3.66 L3.18,3.18 L3.66,2.76 L2.89,1.34 L4.15,0.61 L5.00,1.98 L5.60,1.78 L6.23,1.66 L6.27,0.04 L7.73,0.04 L7.77,1.66 L8.40,1.78 L9.00,1.98 L9.85,0.61 L11.11,1.34 L10.34,2.76 L10.82,3.18 L11.24,3.66 L12.66,2.89 L13.39,4.15 L12.02,5.00Z" fill="#7fa6c6"/><circle cx="7" cy="7" r="5.2" fill="#c4ecf8"/><circle cx="7" cy="7" r="3.3" fill="none" stroke="#6e7880" stroke-width="1.2" stroke-dasharray="2.2 0.5"/><circle cx="7" cy="7" r="2.7" fill="#fff"/><path d="M15.09,11.57 L15.24,12.02 L16.25,12.02 L16.25,13.18 L15.24,13.18 L15.09,13.63 L14.87,14.06 L15.59,14.77 L14.77,15.59 L14.06,14.87 L13.63,15.09 L13.18,15.24 L13.18,16.25 L12.02,16.25 L12.02,15.24 L11.57,15.09 L11.14,14.87 L10.43,15.59 L9.61,14.77 L10.33,14.06 L10.11,13.63 L9.96,13.18 L8.95,13.18 L8.95,12.02 L9.96,12.02 L10.11,11.57 L10.33,11.14 L9.61,10.43 L10.43,9.61 L11.14,10.33 L11.57,10.11 L12.02,9.96 L12.02,8.95 L13.18,8.95 L13.18,9.96 L13.63,10.11 L14.06,10.33 L14.77,9.61 L15.59,10.43 L14.87,11.14Z" fill="#7fa6c6"/><circle cx="12.6" cy="12.6" r="2.6" fill="#b4d8ee"/><circle cx="12.6" cy="12.6" r="1.1" fill="#fff"/></svg></div><div style="position:absolute;left:135px;top:421px;font-size:12px;line-height:14px;white-space:pre;"><span style="display:inline-block;transform-origin:0 0;transform:scaleX(0.8248)">BITS</span></div><div style="position:absolute;left:299px;top:421px;font-size:12px;line-height:14px;white-space:pre;"><span style="display:inline-block;transform-origin:0 0;transform:scaleX(0.8988)">6864</span></div><div style="position:absolute;left:349px;top:421px;font-size:12px;line-height:14px;white-space:pre;"><span style="display:inline-block;transform-origin:0 0;transform:scaleX(0.9769)">Background Intelligent Transfer Servi...</span></div><div style="position:absolute;left:565px;top:421px;font-size:12px;line-height:14px;white-space:pre;"><span style="display:inline-block;transform-origin:0 0;transform:scaleX(1.0066)">Running</span></div><div style="position:absolute;left:665px;top:421px;font-size:12px;line-height:14px;white-space:pre;"><span style="display:inline-block;transform-origin:0 0;transform:scaleX(0.9585)">netsvcs</span></div></div><div style="position:absolute;left:760px;top:193px;width:16px;height:454px;background:#f0f0f0"></div><svg style="position:absolute;left:763px;top:198px" width="10" height="8" viewBox="0 0 10 8"><path d="M1.5,6.5 L5,3 L8.5,6.5" fill="none" stroke="#606060" stroke-width="1.8"/></svg><div style="position:absolute;left:760px;top:210px;width:15px;height:33px;background:#cdcdcd"></div><svg style="position:absolute;left:763px;top:635px" width="10" height="8" viewBox="0 0 10 8"><path d="M1.5,1.5 L5,5 L8.5,1.5" fill="none" stroke="#606060" stroke-width="1.8"/></svg><div style="position:absolute;left:113px;top:647px;width:663px;height:1px;background:#a0a0a0"></div><svg style="position:absolute;left:119px;top:661px" width="21" height="21" viewBox="0 0 21 21"><circle cx="10.4" cy="10.4" r="9.2" fill="none" stroke="#a0a0a0" stroke-width="1"/><path d="M6.3,12.6 L10.4,8.5 L14.5,12.6" fill="none" stroke="#a0a0a0" stroke-width="1.1"/></svg><div style="position:absolute;left:146px;top:665px;font-size:12px;line-height:14px;white-space:pre;"><span style="display:inline-block;transform-origin:0 0;transform:scaleX(0.9527)">Fewer <u>d</u>etails</span></div><div style="position:absolute;left:222px;top:664px;width:1px;height:14px;background:#c8c8c8"></div><div style="position:absolute;left:231px;top:663px;width:16px;height:16px"><svg width="16" height="16" viewBox="0 0 16 16" style="overflow:visible"><path d="M12.22,5.60 L12.34,6.23 L13.96,6.27 L13.96,7.73 L12.34,7.77 L12.22,8.40 L12.02,9.00 L13.39,9.85 L12.66,11.11 L11.24,10.34 L10.82,10.82 L10.34,11.24 L11.11,12.66 L9.85,13.39 L9.00,12.02 L8.40,12.22 L7.77,12.34 L7.73,13.96 L6.27,13.96 L6.23,12.34 L5.60,12.22 L5.00,12.02 L4.15,13.39 L2.89,12.66 L3.66,11.24 L3.18,10.82 L2.76,10.34 L1.34,11.11 L0.61,9.85 L1.98,9.00 L1.78,8.40 L1.66,7.77 L0.04,7.73 L0.04,6.27 L1.66,6.23 L1.78,5.60 L1.98,5.00 L0.61,4.15 L1.34,2.89 L2.76,3.66 L3.18,3.18 L3.66,2.76 L2.89,1.34 L4.15,0.61 L5.00,1.98 L5.60,1.78 L6.23,1.66 L6.27,0.04 L7.73,0.04 L7.77,1.66 L8.40,1.78 L9.00,1.98 L9.85,0.61 L11.11,1.34 L10.34,2.76 L10.82,3.18 L11.24,3.66 L12.66,2.89 L13.39,4.15 L12.02,5.00Z" fill="#7fa6c6"/><circle cx="7" cy="7" r="5.2" fill="#c4ecf8"/><circle cx="7" cy="7" r="3.3" fill="none" stroke="#6e7880" stroke-width="1.2" stroke-dasharray="2.2 0.5"/><circle cx="7" cy="7" r="2.7" fill="#fff"/><path d="M15.09,11.57 L15.24,12.02 L16.25,12.02 L16.25,13.18 L15.24,13.18 L15.09,13.63 L14.87,14.06 L15.59,14.77 L14.77,15.59 L14.06,14.87 L13.63,15.09 L13.18,15.24 L13.18,16.25 L12.02,16.25 L12.02,15.24 L11.57,15.09 L11.14,14.87 L10.43,15.59 L9.61,14.77 L10.33,14.06 L10.11,13.63 L9.96,13.18 L8.95,13.18 L8.95,12.02 L9.96,12.02 L10.11,11.57 L10.33,11.14 L9.61,10.43 L10.43,9.61 L11.14,10.33 L11.57,10.11 L12.02,9.96 L12.02,8.95 L13.18,8.95 L13.18,9.96 L13.63,10.11 L14.06,10.33 L14.77,9.61 L15.59,10.43 L14.87,11.14Z" fill="#7fa6c6"/><circle cx="12.6" cy="12.6" r="2.6" fill="#b4d8ee"/><circle cx="12.6" cy="12.6" r="1.1" fill="#fff"/></svg></div><div style="position:absolute;left:253px;top:665px;font-size:12px;line-height:14px;white-space:pre;color:#0066cc;"><span style="display:inline-block;transform-origin:0 0;transform:scaleX(0.9402)">Open Services</span></div></div>
<div style="position:absolute;left:0;top:878px;width:1697px;height:40px;background:linear-gradient(90deg,#001c26 0%,#001a24 26%,#001822 47%,#00101c 74%,#000c1a 94%,#000c1a 100%)"></div><svg style="position:absolute;left:0;top:0" width="60" height="918" viewBox="0 0 60 918"><path d="M16,891.9 L22,891.1 V897 H16Z M23,890.9 L32.2,889.7 V897 H23Z M16,898 H22 V904.9 L16,904.1Z M23,898 H32.2 V906.2 L23,905Z" fill="#fff"/></svg><div style="position:absolute;left:48px;top:878px;width:344px;height:40px;background:#f2f2f2;border-bottom:1px solid #c6c6c6;box-sizing:border-box"></div><svg style="position:absolute;left:59px;top:889px" width="18" height="18" viewBox="0 0 18 18"><circle cx="11.5" cy="6.5" r="5.3" fill="none" stroke="#000" stroke-width="1.1"/><path d="M7.7,10.3 L1.2,16.8" stroke="#000" stroke-width="1.2"/></svg><div style="position:absolute;left:88px;top:889px;font-size:15px;line-height:14px;white-space:pre;color:#2a2a2a;line-height:17px;"><span style="display:inline-block;transform-origin:0 0;transform:scaleX(0.9806)">Type here to search</span></div><div style="position:absolute;left:639px;top:878px;width:48px;height:40px;background:#34444f"></div><div style="position:absolute;left:639px;top:916px;width:48px;height:2px;background:#76b9ed"></div><div style="position:absolute;left:692px;top:916px;width:40px;height:2px;background:#76b9ed"></div><svg style="position:absolute;left:0;top:0" width="1697" height="918" viewBox="0 0 1697 918">
<defs>
<linearGradient id="exB" x1="0" y1="0" x2="0" y2="1"><stop offset="0" stop-color="#ffdc78"/><stop offset="1" stop-color="#f9c640"/></linearGradient>
<linearGradient id="tmS" x1="0" y1="0" x2="0" y2="1"><stop offset="0" stop-color="#f2f8fc"/><stop offset="1" stop-color="#cfe6f5"/></linearGradient>
<linearGradient id="tmF" x1="0" y1="0" x2="1" y2="1"><stop offset="0" stop-color="#f0f0f0"/><stop offset="1" stop-color="#a8a8a8"/></linearGradient>
</defs>
<g fill="#fff">
 <rect x="408" y="892" width="11" height="1"/><rect x="408" y="890" width="1" height="3"/><rect x="418" y="890" width="1" height="3"/>
 <path d="M408,894 h11 v7 h-11z M409,895 v5 h9 v-5z" fill-rule="evenodd"/>
 <rect x="408" y="902" width="11" height="1"/><rect x="408" y="902" width="1" height="3"/><rect x="418" y="902" width="1" height="3"/>
 <rect x="422" y="890" width="1" height="3"/><rect x="421" y="894" width="3" height="3"/><rect x="422" y="898" width="1" height="7"/>
</g>
<g transform="translate(450.5,880.9) scale(0.71)"><path d="M9.2,21.7 C11.5,13 18,8.6 25.5,8.6 C33,8.6 38,14 38,22 L38,27.2 L18.2,27.2 C18.6,31 21.8,33 26,33 C29.5,33 32.5,31.8 34.8,30.2 L34.8,36.6 C32,38.3 28.8,39.2 25,39.2 C17.2,39.2 12.6,34 12.6,27 C12.6,22.5 14.5,18.5 19,15.8 C15.5,16.5 11.5,18.8 9.2,21.7 Z M18,20.9 L29,20.9 C29,17.5 27,14.9 23.5,14.9 C20.5,14.9 18.5,17.5 18,20.9 Z" fill="#0a78d7" fill-rule="evenodd"/></g>
<path d="M505.2,889.1 h8.6 l1.2,1 h11.4 v2 h-21.2z" fill="#e6a100"/>
<rect x="505.2" y="891.7" width="21.2" height="14.3" fill="url(#exB)"/>
<path d="M509.2,906.8 v-6.3 a1.5,1.5 0 0 1 1.5,-1.5 h10.7 a1.5,1.5 0 0 1 1.5,1.5 v6.3 h-3.8 v-4.5 h-6 v4.5z" fill="#3c95dc"/>
<path d="M560.5,892 C560.5,887.5 562.8,886 565.5,886 C568.2,886 570.5,887.5 570.5,892" fill="none" stroke="#fff" stroke-width="1.3"/>
<path d="M562.6,892 C562.6,889.2 563.8,888.2 565.5,888.2" fill="none" stroke="#fff" stroke-width="0.9"/>
<path d="M553,891.9 h23 v15.2 a2,2 0 0 1 -2,2 h-19 a2,2 0 0 1 -2,-2z" fill="#fff"/>
<rect x="559" y="895" width="4.9" height="4.9" fill="#f25022"/><rect x="565.1" y="895" width="4.9" height="4.9" fill="#7fba00"/>
<rect x="559" y="901.1" width="4.9" height="4.7" fill="#00a4ef"/><rect x="565.1" y="901.1" width="4.9" height="4.7" fill="#ffb900"/>
<path d="M601.8,893.6 L613.7,887.8 L626.1,893.6 V907.1 H601.8Z" fill="#fff"/>
<path d="M602.8,894 H626 L616,899.2 L621,904 Z" fill="#001822"/>
<path d="M652,892.5 l4,-1 v13 l-4,-0.5z" fill="url(#tmF)"/>
<rect x="652.5" y="894" width="1.6" height="1.2" fill="#3cd83c"/>
<path d="M656.5,889.5 L673.8,887.8 L673.8,902.5 L656.5,903.2Z" fill="url(#tmF)"/>
<path d="M658,891 L672.4,889.6 L672.4,901.2 L658,901.8Z" fill="url(#tmS)"/>
<polyline points="658.5,898.5 660.5,897.5 662,893.2 663.5,898.8 665.2,896.6 667,898.8 668.6,895.6 670,899 672,898" fill="none" stroke="#3a88c8" stroke-width="0.8"/>
<rect x="663.6" y="903" width="3" height="3" fill="#c8c8c8"/>
<ellipse cx="665.4" cy="907.2" rx="5.4" ry="1.9" fill="#d8d8d8"/>
</svg><svg style="position:absolute;left:0;top:0" width="1697" height="918" viewBox="0 0 1697 918">
<defs><radialGradient id="plt" cx="0.45" cy="0.4" r="0.6"><stop offset="0" stop-color="#e6f4fc"/><stop offset="1" stop-color="#a6d0ec"/></radialGradient></defs>
<path d="M700.5,900 C700,894 705,890 711,889.8 C718,889.6 722,893.5 721.8,898.5 C721.6,903.5 717.5,906.8 712,906.8 C708.5,906.8 707.5,905 707.5,903.6 C707.5,902.4 706.6,902 705.6,902.6 C704.4,903.4 703,904.6 701.8,903.8 C700.8,903 700.5,901.6 700.5,900Z" fill="url(#plt)" stroke="#7fb6da" stroke-width="0.6"/>
<circle cx="703.8" cy="899" r="1.9" fill="#e03c3c"/>
<circle cx="707.8" cy="895.6" r="1.9" fill="#3cbf3c"/>
<circle cx="712.6" cy="893.6" r="1.9" fill="#f6b41c"/>
<circle cx="710" cy="900.6" r="1.3" fill="#061420"/>
<path d="M711,909.8 L717.2,895.8 L719,896.6 L712,910.2Z" fill="#f0901c"/>
<path d="M717.2,895.8 L718.6,891.8 L720.2,892.4 L719,896.6Z" fill="#b0b0b0"/>
<path d="M718.4,891.6 L717.8,887 C719.5,885.8 721.8,886 723.6,887.6 L720.4,892.4Z" fill="#dcb078"/>
</svg><svg style="position:absolute;left:1471px;top:893px" width="14" height="9" viewBox="0 0 14 9"><path d="M1,8 L7,2 L13,8" fill="none" stroke="#fff" stroke-width="1.1"/></svg><svg style="position:absolute;left:1494px;top:891px" width="17" height="15" viewBox="0 0 17 15"><rect x="0.5" y="0.5" width="4" height="4" fill="none" stroke="#fff" stroke-width="0.9"/><path d="M5,1.5 h11 v9 h-11" fill="none" stroke="#fff" stroke-width="1.1"/><path d="M2.5,4.5 V14.5 M4.5,13.5 h7 M8,10.5 v3" fill="none" stroke="#fff" stroke-width="1"/></svg><svg style="position:absolute;left:1518px;top:891px" width="17" height="15" viewBox="0 0 17 15"><path d="M1,5 h3 L8,1 V14 L4,10 H1Z" fill="none" stroke="#fff" stroke-width="1"/><path d="M10.5,5 C11.5,6.5 11.5,8.5 10.5,10 M12.5,3 C14.5,5.5 14.5,9.5 12.5,12 M14.5,1 C17.5,4.5 17.5,10.5 14.5,14" fill="none" stroke="#fff" stroke-width="1"/></svg><div style="position:absolute;left:1543px;top:891px;font-size:12.5px;line-height:14px;white-space:pre;color:#fff;"><span style="display:inline-block;transform-origin:0 0;transform:scaleX(0.9467)">DAN</span></div><div style="position:absolute;left:1594px;top:882px;font-size:12px;line-height:14px;white-space:pre;color:#fff;"><span style="display:inline-block;transform-origin:0 0;transform:scaleX(0.9490)">07.40</span></div><div style="position:absolute;left:1580px;top:900px;font-size:12px;line-height:14px;white-space:pre;color:#fff;"><span style="display:inline-block;transform-origin:0 0;transform:scaleX(0.9740)">12/02/2020</span></div><svg style="position:absolute;left:1655px;top:889px" width="24" height="24" viewBox="0 0 24 24"><path d="M1,1 h16 v13 h-9 l-3,3 v-3 h-4z" fill="#fff"/><path d="M4,4.5 h10 M4,7.5 h10 M4,10.5 h7" stroke="#021020" stroke-width="1.2"/><circle cx="16.8" cy="16" r="7.6" fill="#262a31" stroke="#6e737a" stroke-width="1"/><path d="M15.2,12.8 L17.4,11.4 V20" fill="none" stroke="#fff" stroke-width="1.6"/></svg><div style="position:absolute;left:1692px;top:878px;width:1px;height:40px;background:#6a6f78"></div>
</body></html>
